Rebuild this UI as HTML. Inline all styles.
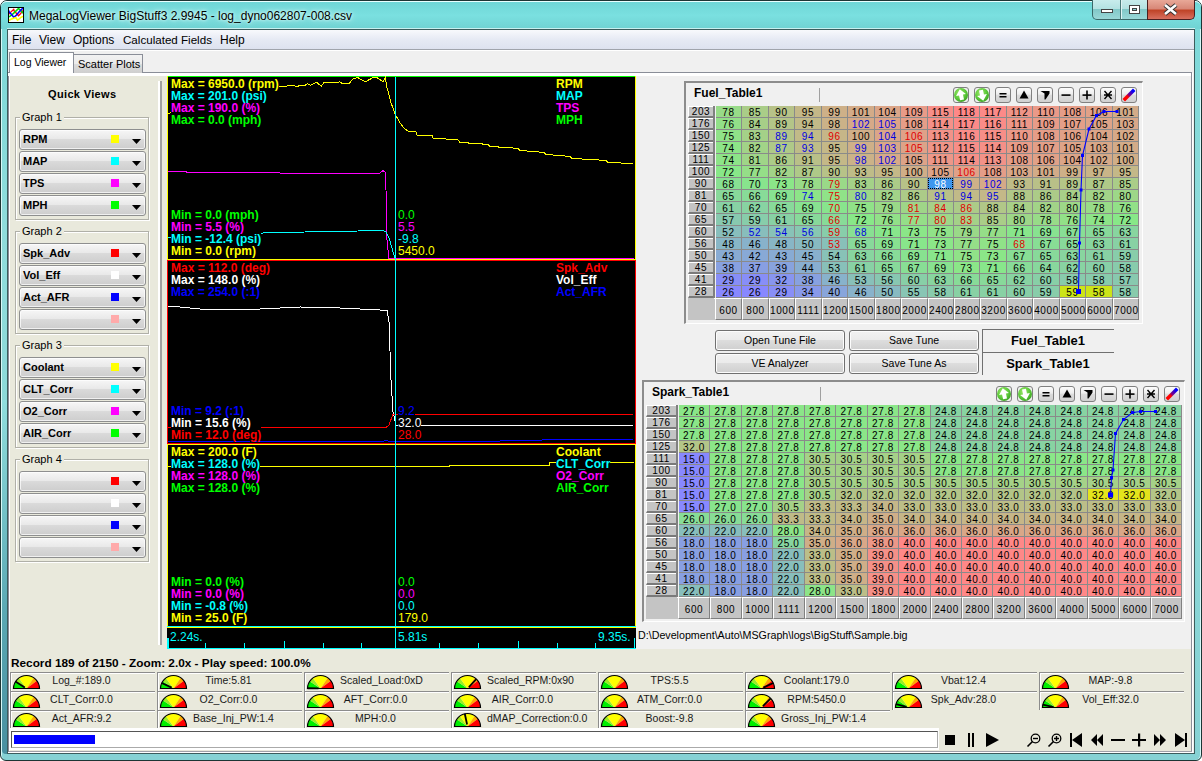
<!DOCTYPE html><html><head><meta charset="utf-8"><style>
*{margin:0;padding:0;box-sizing:border-box}
body{width:1202px;height:761px;overflow:hidden;position:relative;background:#fff;font-family:"Liberation Sans",sans-serif;font-size:11px;color:#000}
div{position:absolute}
.t{white-space:pre;line-height:12px}
.b{font-weight:bold}
</style></head><body><div style="position:absolute;left:0px;top:0px;width:1202px;height:761px;background:linear-gradient(#7ad8d8,#8fdcdc 30%,#86d2d4);border:1px solid #1d3534;border-radius:7px 7px 6px 6px;box-shadow:inset 1px 1px 0 #d8f8f8,inset -1px 0 0 #d8f8f8"></div><div style="position:absolute;left:2px;top:400px;width:5px;height:354px;background:linear-gradient(#90dede,#5aa8b4 60%,#4890a0);border-radius:0 0 0 4px"></div><div style="position:absolute;left:1px;top:1px;width:1200px;height:28px;background:linear-gradient(#6fd6d6,#7ae0e0 50%,#70d2d2);border-radius:6px 6px 0 0;border-top:1px solid #e8ffff"></div><div style="position:absolute;left:7px;top:28px;width:1188px;height:1px;background:#c8f0f0"></div><div style="position:absolute;left:7px;top:29px;width:1188px;height:725px;background:#f0f0f0;border:1px solid #3c5c5c"></div><div style="position:absolute;left:8px;top:7px;width:16px;height:16px;background:#fff;border:1px solid #000"><svg width="14" height="14" style="position:absolute;left:0;top:0"><polyline points="0,6.2 2.2,3.6 4.7,1.4 5.4,3.3 7.6,5.5 9.5,7.7 11.7,5.5 14,2.5" stroke="#f00" stroke-width="1.3" fill="none"/><polyline points="0,9 2.8,6.8 5,4.9 7.6,2.4 9.5,0.5 11.7,2.4 14,5.2" stroke="#0d0" stroke-width="1.5" fill="none"/><polyline points="-0.5,2.4 0.3,3.9 1.9,5.8 3.8,8 4.7,9.3 6.9,7.7 10.4,3.6 12.6,1.4 14,0" stroke="#00f" stroke-width="1.5" fill="none"/><polyline points="0,12.5 1.9,11.2 5.4,9.9 6.9,9.6 8.5,12.1 10,11.2 11.9,9.3 14,8.4" stroke="#ff0" stroke-width="1.6" fill="none"/></svg></div><div style="position:absolute;left:29px;top:9px;white-space:pre;font-size:12px;line-height:14px;color:#000;text-shadow:0 0 6px #e8fff8,0 0 3px #e8fff8">MegaLogViewer BigStuff3 2.9945 - log_dyno062807-008.csv</div><div style="position:absolute;left:1092px;top:0px;width:29px;height:20px;background:linear-gradient(#c8ecec,#b4e2e2 45%,#82c8c8 50%,#9ad8d8);border:1px solid #3a6868;border-top:none;border-radius:0 0 0 5px"><div style="position:absolute;left:8px;top:9px;width:12px;height:4px;background:#fff;border:1px solid #444"></div></div><div style="position:absolute;left:1120px;top:0px;width:28px;height:20px;background:linear-gradient(#c8ecec,#b4e2e2 45%,#82c8c8 50%,#9ad8d8);border:1px solid #3a6868;border-top:none;border-left:1px solid #4a7a7a;box-shadow:inset 1px 0 0 #e0f4f4"><div style="position:absolute;left:8px;top:5px;width:11px;height:9px;background:#fff;border:1px solid #444"><div style="position:absolute;left:2px;top:2px;width:5px;height:3px;background:#8cc;border:1px solid #444"></div></div></div><div style="position:absolute;left:1147px;top:0px;width:48px;height:20px;background:linear-gradient(#e8a898,#d88878 45%,#c04428 55%,#d87060);border:1px solid #4a2020;border-top:none;border-radius:0 0 5px 0"><svg width="48" height="20" style="position:absolute;left:-1px;top:0"><path d="M18 5 L29 14 M29 5 L18 14" stroke="#333" stroke-width="4.5"/><path d="M18 5 L29 14 M29 5 L18 14" stroke="#fff" stroke-width="2.6"/></svg></div><div style="position:absolute;left:8px;top:30px;width:1186px;height:19px;background:linear-gradient(#f8f9fc,#e6eaf4 50%,#dde2ef)"></div><div style="position:absolute;left:8px;top:49px;width:1186px;height:1px;background:#a0a4ac"></div><div style="position:absolute;left:8px;top:50px;width:1186px;height:1px;background:#fff"></div><div style="position:absolute;left:12px;top:33px;white-space:pre;font-size:12px;line-height:14px">File</div><div style="position:absolute;left:39px;top:33px;white-space:pre;font-size:12px;line-height:14px">View</div><div style="position:absolute;left:73px;top:33px;white-space:pre;font-size:12px;line-height:14px">Options</div><div style="position:absolute;left:123px;top:33px;white-space:pre;font-size:11.6px;line-height:14px">Calculated Fields</div><div style="position:absolute;left:220px;top:33px;white-space:pre;font-size:12px;line-height:14px">Help</div><div style="position:absolute;left:8px;top:51px;width:1186px;height:22px;background:#f0f0f0"></div><div style="position:absolute;left:8px;top:72px;width:1184px;height:1px;background:#8a8e98"></div><div style="position:absolute;left:8px;top:73px;width:1184px;height:3px;background:#fff"></div><div style="position:absolute;left:9px;top:52px;width:65px;height:21px;background:#fff;border:1px solid #8a8e98;border-bottom:none"></div><div style="position:absolute;left:14px;top:56px;white-space:pre;font-size:10.5px;line-height:13px">Log Viewer</div><div style="position:absolute;left:73px;top:54px;width:70px;height:19px;background:linear-gradient(#f2f2f2,#ebebeb 50%,#dcdcdc 50%,#cfcfcf);border:1px solid #8a8e98;border-bottom:none"></div><div style="position:absolute;left:78px;top:58px;white-space:pre;font-size:11px;line-height:13px">Scatter Plots</div><div style="position:absolute;left:10px;top:76px;width:1181px;height:675px;background:#e9e9dc"></div><div style="position:absolute;left:8px;top:76px;width:1px;height:676px;background:#8a8a96"></div><div style="position:absolute;left:9px;top:76px;width:1px;height:675px;background:#fff"></div><div style="position:absolute;left:1191px;top:72px;width:1px;height:680px;background:#8a8e98"></div><div style="position:absolute;left:1192px;top:73px;width:1px;height:680px;background:#fff"></div><div style="position:absolute;left:9px;top:751px;width:1183px;height:1px;background:#a0a0a8"></div><div style="position:absolute;left:8px;top:752px;width:1185px;height:1px;background:#fff"></div><div style="position:absolute;left:48px;top:88px;white-space:pre;font-weight:bold;font-size:11px;line-height:12px;letter-spacing:0.35px">Quick Views</div><div style="position:absolute;left:158px;top:81px;width:2px;height:564px;background:#fff"></div><div style="position:absolute;left:160px;top:81px;width:2px;height:564px;background:#a0a0a0"></div><div style="position:absolute;left:15px;top:117px;width:134px;height:103px;border:1px solid #b0b0a8;box-shadow:inset 1px 1px 0 #fff,1px 1px 0 #fff"></div><div style="position:absolute;left:20px;top:111px;white-space:pre;font-size:11px;line-height:12px;background:#e9e9dc;padding:0 2px">Graph 1</div><div style="position:absolute;left:19px;top:129px;width:127px;height:21px;border:1px solid #8e8f8f;border-radius:3px;background:linear-gradient(#f6f6f6,#e9e9e9 45%,#dadada 50%,#cdcdcd);box-shadow:inset 0 0 0 1px rgba(255,255,255,.7)"></div><div style="position:absolute;left:23px;top:133px;white-space:pre;font-weight:bold;font-size:11px;line-height:12px">RPM</div><div style="position:absolute;left:111px;top:135px;width:8px;height:8px;background:#ffff00"></div><svg style="position:absolute;left:132px;top:139px" width="9" height="5"><path d="M0 0 H9 L4.5 5 Z" fill="#000"/></svg><div style="position:absolute;left:19px;top:151px;width:127px;height:21px;border:1px solid #8e8f8f;border-radius:3px;background:linear-gradient(#f6f6f6,#e9e9e9 45%,#dadada 50%,#cdcdcd);box-shadow:inset 0 0 0 1px rgba(255,255,255,.7)"></div><div style="position:absolute;left:23px;top:155px;white-space:pre;font-weight:bold;font-size:11px;line-height:12px">MAP</div><div style="position:absolute;left:111px;top:157px;width:8px;height:8px;background:#00ffff"></div><svg style="position:absolute;left:132px;top:161px" width="9" height="5"><path d="M0 0 H9 L4.5 5 Z" fill="#000"/></svg><div style="position:absolute;left:19px;top:173px;width:127px;height:21px;border:1px solid #8e8f8f;border-radius:3px;background:linear-gradient(#f6f6f6,#e9e9e9 45%,#dadada 50%,#cdcdcd);box-shadow:inset 0 0 0 1px rgba(255,255,255,.7)"></div><div style="position:absolute;left:23px;top:177px;white-space:pre;font-weight:bold;font-size:11px;line-height:12px">TPS</div><div style="position:absolute;left:111px;top:179px;width:8px;height:8px;background:#ff00ff"></div><svg style="position:absolute;left:132px;top:183px" width="9" height="5"><path d="M0 0 H9 L4.5 5 Z" fill="#000"/></svg><div style="position:absolute;left:19px;top:195px;width:127px;height:21px;border:1px solid #8e8f8f;border-radius:3px;background:linear-gradient(#f6f6f6,#e9e9e9 45%,#dadada 50%,#cdcdcd);box-shadow:inset 0 0 0 1px rgba(255,255,255,.7)"></div><div style="position:absolute;left:23px;top:199px;white-space:pre;font-weight:bold;font-size:11px;line-height:12px">MPH</div><div style="position:absolute;left:111px;top:201px;width:8px;height:8px;background:#00ff00"></div><svg style="position:absolute;left:132px;top:205px" width="9" height="5"><path d="M0 0 H9 L4.5 5 Z" fill="#000"/></svg><div style="position:absolute;left:15px;top:231px;width:134px;height:103px;border:1px solid #b0b0a8;box-shadow:inset 1px 1px 0 #fff,1px 1px 0 #fff"></div><div style="position:absolute;left:20px;top:225px;white-space:pre;font-size:11px;line-height:12px;background:#e9e9dc;padding:0 2px">Graph 2</div><div style="position:absolute;left:19px;top:243px;width:127px;height:21px;border:1px solid #8e8f8f;border-radius:3px;background:linear-gradient(#f6f6f6,#e9e9e9 45%,#dadada 50%,#cdcdcd);box-shadow:inset 0 0 0 1px rgba(255,255,255,.7)"></div><div style="position:absolute;left:23px;top:247px;white-space:pre;font-weight:bold;font-size:11px;line-height:12px">Spk_Adv</div><div style="position:absolute;left:111px;top:249px;width:8px;height:8px;background:#ff0000"></div><svg style="position:absolute;left:132px;top:253px" width="9" height="5"><path d="M0 0 H9 L4.5 5 Z" fill="#000"/></svg><div style="position:absolute;left:19px;top:265px;width:127px;height:21px;border:1px solid #8e8f8f;border-radius:3px;background:linear-gradient(#f6f6f6,#e9e9e9 45%,#dadada 50%,#cdcdcd);box-shadow:inset 0 0 0 1px rgba(255,255,255,.7)"></div><div style="position:absolute;left:23px;top:269px;white-space:pre;font-weight:bold;font-size:11px;line-height:12px">Vol_Eff</div><div style="position:absolute;left:111px;top:271px;width:8px;height:8px;background:#ffffff"></div><svg style="position:absolute;left:132px;top:275px" width="9" height="5"><path d="M0 0 H9 L4.5 5 Z" fill="#000"/></svg><div style="position:absolute;left:19px;top:287px;width:127px;height:21px;border:1px solid #8e8f8f;border-radius:3px;background:linear-gradient(#f6f6f6,#e9e9e9 45%,#dadada 50%,#cdcdcd);box-shadow:inset 0 0 0 1px rgba(255,255,255,.7)"></div><div style="position:absolute;left:23px;top:291px;white-space:pre;font-weight:bold;font-size:11px;line-height:12px">Act_AFR</div><div style="position:absolute;left:111px;top:293px;width:8px;height:8px;background:#0000ff"></div><svg style="position:absolute;left:132px;top:297px" width="9" height="5"><path d="M0 0 H9 L4.5 5 Z" fill="#000"/></svg><div style="position:absolute;left:19px;top:309px;width:127px;height:21px;border:1px solid #8e8f8f;border-radius:3px;background:linear-gradient(#f6f6f6,#e9e9e9 45%,#dadada 50%,#cdcdcd);box-shadow:inset 0 0 0 1px rgba(255,255,255,.7)"></div><div style="position:absolute;left:23px;top:313px;white-space:pre;font-weight:bold;font-size:11px;line-height:12px"></div><div style="position:absolute;left:111px;top:315px;width:8px;height:8px;background:#ffaaaa"></div><svg style="position:absolute;left:132px;top:319px" width="9" height="5"><path d="M0 0 H9 L4.5 5 Z" fill="#000"/></svg><div style="position:absolute;left:15px;top:345px;width:134px;height:103px;border:1px solid #b0b0a8;box-shadow:inset 1px 1px 0 #fff,1px 1px 0 #fff"></div><div style="position:absolute;left:20px;top:339px;white-space:pre;font-size:11px;line-height:12px;background:#e9e9dc;padding:0 2px">Graph 3</div><div style="position:absolute;left:19px;top:357px;width:127px;height:21px;border:1px solid #8e8f8f;border-radius:3px;background:linear-gradient(#f6f6f6,#e9e9e9 45%,#dadada 50%,#cdcdcd);box-shadow:inset 0 0 0 1px rgba(255,255,255,.7)"></div><div style="position:absolute;left:23px;top:361px;white-space:pre;font-weight:bold;font-size:11px;line-height:12px">Coolant</div><div style="position:absolute;left:111px;top:363px;width:8px;height:8px;background:#ffff00"></div><svg style="position:absolute;left:132px;top:367px" width="9" height="5"><path d="M0 0 H9 L4.5 5 Z" fill="#000"/></svg><div style="position:absolute;left:19px;top:379px;width:127px;height:21px;border:1px solid #8e8f8f;border-radius:3px;background:linear-gradient(#f6f6f6,#e9e9e9 45%,#dadada 50%,#cdcdcd);box-shadow:inset 0 0 0 1px rgba(255,255,255,.7)"></div><div style="position:absolute;left:23px;top:383px;white-space:pre;font-weight:bold;font-size:11px;line-height:12px">CLT_Corr</div><div style="position:absolute;left:111px;top:385px;width:8px;height:8px;background:#00ffff"></div><svg style="position:absolute;left:132px;top:389px" width="9" height="5"><path d="M0 0 H9 L4.5 5 Z" fill="#000"/></svg><div style="position:absolute;left:19px;top:401px;width:127px;height:21px;border:1px solid #8e8f8f;border-radius:3px;background:linear-gradient(#f6f6f6,#e9e9e9 45%,#dadada 50%,#cdcdcd);box-shadow:inset 0 0 0 1px rgba(255,255,255,.7)"></div><div style="position:absolute;left:23px;top:405px;white-space:pre;font-weight:bold;font-size:11px;line-height:12px">O2_Corr</div><div style="position:absolute;left:111px;top:407px;width:8px;height:8px;background:#ff00ff"></div><svg style="position:absolute;left:132px;top:411px" width="9" height="5"><path d="M0 0 H9 L4.5 5 Z" fill="#000"/></svg><div style="position:absolute;left:19px;top:423px;width:127px;height:21px;border:1px solid #8e8f8f;border-radius:3px;background:linear-gradient(#f6f6f6,#e9e9e9 45%,#dadada 50%,#cdcdcd);box-shadow:inset 0 0 0 1px rgba(255,255,255,.7)"></div><div style="position:absolute;left:23px;top:427px;white-space:pre;font-weight:bold;font-size:11px;line-height:12px">AIR_Corr</div><div style="position:absolute;left:111px;top:429px;width:8px;height:8px;background:#00ff00"></div><svg style="position:absolute;left:132px;top:433px" width="9" height="5"><path d="M0 0 H9 L4.5 5 Z" fill="#000"/></svg><div style="position:absolute;left:15px;top:459px;width:134px;height:103px;border:1px solid #b0b0a8;box-shadow:inset 1px 1px 0 #fff,1px 1px 0 #fff"></div><div style="position:absolute;left:20px;top:453px;white-space:pre;font-size:11px;line-height:12px;background:#e9e9dc;padding:0 2px">Graph 4</div><div style="position:absolute;left:19px;top:471px;width:127px;height:21px;border:1px solid #8e8f8f;border-radius:3px;background:linear-gradient(#f6f6f6,#e9e9e9 45%,#dadada 50%,#cdcdcd);box-shadow:inset 0 0 0 1px rgba(255,255,255,.7)"></div><div style="position:absolute;left:23px;top:475px;white-space:pre;font-weight:bold;font-size:11px;line-height:12px"></div><div style="position:absolute;left:111px;top:477px;width:8px;height:8px;background:#ff0000"></div><svg style="position:absolute;left:132px;top:481px" width="9" height="5"><path d="M0 0 H9 L4.5 5 Z" fill="#000"/></svg><div style="position:absolute;left:19px;top:493px;width:127px;height:21px;border:1px solid #8e8f8f;border-radius:3px;background:linear-gradient(#f6f6f6,#e9e9e9 45%,#dadada 50%,#cdcdcd);box-shadow:inset 0 0 0 1px rgba(255,255,255,.7)"></div><div style="position:absolute;left:23px;top:497px;white-space:pre;font-weight:bold;font-size:11px;line-height:12px"></div><div style="position:absolute;left:111px;top:499px;width:8px;height:8px;background:#ffffff"></div><svg style="position:absolute;left:132px;top:503px" width="9" height="5"><path d="M0 0 H9 L4.5 5 Z" fill="#000"/></svg><div style="position:absolute;left:19px;top:515px;width:127px;height:21px;border:1px solid #8e8f8f;border-radius:3px;background:linear-gradient(#f6f6f6,#e9e9e9 45%,#dadada 50%,#cdcdcd);box-shadow:inset 0 0 0 1px rgba(255,255,255,.7)"></div><div style="position:absolute;left:23px;top:519px;white-space:pre;font-weight:bold;font-size:11px;line-height:12px"></div><div style="position:absolute;left:111px;top:521px;width:8px;height:8px;background:#0000ff"></div><svg style="position:absolute;left:132px;top:525px" width="9" height="5"><path d="M0 0 H9 L4.5 5 Z" fill="#000"/></svg><div style="position:absolute;left:19px;top:537px;width:127px;height:21px;border:1px solid #8e8f8f;border-radius:3px;background:linear-gradient(#f6f6f6,#e9e9e9 45%,#dadada 50%,#cdcdcd);box-shadow:inset 0 0 0 1px rgba(255,255,255,.7)"></div><div style="position:absolute;left:23px;top:541px;white-space:pre;font-weight:bold;font-size:11px;line-height:12px"></div><div style="position:absolute;left:111px;top:543px;width:8px;height:8px;background:#ffaaaa"></div><svg style="position:absolute;left:132px;top:547px" width="9" height="5"><path d="M0 0 H9 L4.5 5 Z" fill="#000"/></svg><div style="position:absolute;left:167px;top:76px;width:469px;height:573px;background:#000"></div><div style="position:absolute;left:167px;top:76px;width:469px;height:1px;background:#00ff00"></div><div style="position:absolute;left:167px;top:76px;width:1px;height:184px;background:#ffff00"></div><div style="position:absolute;left:635px;top:76px;width:1px;height:184px;background:#ffff00"></div><div style="position:absolute;left:167px;top:259px;width:469px;height:1px;background:#ffff00"></div><div style="position:absolute;left:167px;top:260px;width:469px;height:1px;background:#ff0000"></div><div style="position:absolute;left:167px;top:260px;width:1px;height:184px;background:#ff0000"></div><div style="position:absolute;left:635px;top:260px;width:1px;height:184px;background:#ff0000"></div><div style="position:absolute;left:167px;top:443px;width:469px;height:1px;background:#ff0000"></div><div style="position:absolute;left:167px;top:444px;width:469px;height:1px;background:#ffff00"></div><div style="position:absolute;left:167px;top:444px;width:1px;height:183px;background:#ffff00"></div><div style="position:absolute;left:635px;top:444px;width:1px;height:183px;background:#ffff00"></div><div style="position:absolute;left:167px;top:626px;width:469px;height:1px;background:#ffff00"></div><svg width="1202" height="761" style="position:absolute;left:0;top:0" shape-rendering="crispEdges"><polyline points="168,114 172,112 190,100 220,93 250,89 280.5,86.8 290.4,85.6 296.8,86.2 305,85.3 307.3,83.6 310.2,85.3 316.6,82.4 321.2,86.2 324.2,82.4 338.1,82.4 339.3,81.6 341.6,83.1 349.2,83.3 353.3,78.7 357.4,77.5 365.5,81.6 370.2,79.2 373,77.5 376.6,77.5 383,81.6 385.3,77.5 386.5,85.6 391.1,103.1 395.2,114.2 400,123 404,128.2 408,131 416,132 417,135 432,135 433,138 458,140 460,142.4 488,144.4 490,146.4 518,148.4 520,150.4 544,152.4 546,154.4 570,156.4 572,158.4 606,160.4 608,162.4 633,163.6" stroke="#ffff00" stroke-width="1" fill="none" shape-rendering="crispEdges"/><polyline points="168,171.5 186,171.5 187,172.5 210,172.5 260,172.5 280,173 360,173 380,173 383,170.5 385,172 386,190 387,240 389,259" stroke="#ff00ff" stroke-width="1" fill="none" shape-rendering="crispEdges"/><polyline points="168,237.5 180,236 200,235 230,234 260,233.5 266,232.5 305,232 358,231 383,230.5 386,232 389,238 392,248 395,259" stroke="#00ffff" stroke-width="1" fill="none" shape-rendering="crispEdges"/><polyline points="168,306 180,307 200,309 230,310 260,309 300,307 340,308 360,309 380,310 387,310 389,322 391,380 393,412 396,425 633,425" stroke="#ffffff" stroke-width="1" fill="none" shape-rendering="crispEdges"/><polyline points="168,427.5 386,427.5 389,425 393,414 633,414" stroke="#ff0000" stroke-width="1" fill="none" shape-rendering="crispEdges"/><polyline points="168,441.5 240,441.5 250,441 300,441.5 350,441.5 383,441.5 386,440 389,441.5 400,442 420,441 460,441 500,441 540,440.5 545,439.5 633,439.5" stroke="#0000ff" stroke-width="1" fill="none" shape-rendering="crispEdges"/><polyline points="168,466.5 449,466.5 450,465.5 549,465.5 550,462.5 634,462.5" stroke="#ffff00" stroke-width="1" fill="none" shape-rendering="crispEdges"/><rect x="389" y="258" width="245" height="1" fill="#ff00ff"/><rect x="395" y="77" width="1" height="571" fill="#00ffff"/></svg><div style="left:171px;top:78px;background:#000;font-weight:bold;font-size:12px;line-height:12px"><div style="position:static;white-space:pre;color:#ffff00">Max = 6950.0 (rpm)</div><div style="position:static;white-space:pre;color:#00ffff">Max = 201.0 (psi)</div><div style="position:static;white-space:pre;color:#ff00ff">Max = 190.0 (%)</div><div style="position:static;white-space:pre;color:#00ff00">Max = 0.0 (mph)</div></div><div style="position:absolute;left:556px;top:78px;white-space:pre;font-size:12px;line-height:12px;background:#000;color:#ffff00;font-weight:bold">RPM</div><div style="position:absolute;left:556px;top:90px;white-space:pre;font-size:12px;line-height:12px;background:#000;color:#00ffff;font-weight:bold">MAP</div><div style="position:absolute;left:556px;top:102px;white-space:pre;font-size:12px;line-height:12px;background:#000;color:#ff00ff;font-weight:bold">TPS</div><div style="position:absolute;left:556px;top:114px;white-space:pre;font-size:12px;line-height:12px;background:#000;color:#00ff00;font-weight:bold">MPH</div><div style="left:171px;top:209px;background:#000;font-weight:bold;font-size:12px;line-height:12px"><div style="position:static;white-space:pre;color:#00ff00">Min = 0.0 (mph)</div><div style="position:static;white-space:pre;color:#ff00ff">Min = 5.5 (%)</div><div style="position:static;white-space:pre;color:#00ffff">Min = -12.4 (psi)</div><div style="position:static;white-space:pre;color:#ffff00">Min = 0.0 (rpm)</div></div><div style="position:absolute;left:398px;top:209px;white-space:pre;font-size:12px;line-height:12px;background:#000;color:#00ff00;">0.0</div><div style="position:absolute;left:398px;top:221px;white-space:pre;font-size:12px;line-height:12px;background:#000;color:#ff00ff;">5.5</div><div style="position:absolute;left:398px;top:233px;white-space:pre;font-size:12px;line-height:12px;background:#000;color:#00ffff;">-9.8</div><div style="position:absolute;left:398px;top:245px;white-space:pre;font-size:12px;line-height:12px;background:#000;color:#ffff00;">5450.0</div><div style="left:171px;top:262px;background:#000;font-weight:bold;font-size:12px;line-height:12px"><div style="position:static;white-space:pre;color:#ff0000">Max = 112.0 (deg)</div><div style="position:static;white-space:pre;color:#ffffff">Max = 148.0 (%)</div><div style="position:static;white-space:pre;color:#0000ff">Max = 254.0 (:1)</div></div><div style="position:absolute;left:556px;top:262px;white-space:pre;font-size:12px;line-height:12px;background:#000;color:#ff0000;font-weight:bold">Spk_Adv</div><div style="position:absolute;left:556px;top:274px;white-space:pre;font-size:12px;line-height:12px;background:#000;color:#ffffff;font-weight:bold">Vol_Eff</div><div style="position:absolute;left:556px;top:286px;white-space:pre;font-size:12px;line-height:12px;background:#000;color:#0000ff;font-weight:bold">Act_AFR</div><div style="left:171px;top:405px;background:#000;font-weight:bold;font-size:12px;line-height:12px"><div style="position:static;white-space:pre;color:#0000ff">Min = 9.2 (:1)</div><div style="position:static;white-space:pre;color:#ffffff">Min = 15.6 (%)</div><div style="position:static;white-space:pre;color:#ff0000">Min = 12.0 (deg)</div></div><div style="position:absolute;left:398px;top:405px;white-space:pre;font-size:12px;line-height:12px;background:#000;color:#0000ff;">9.2</div><div style="position:absolute;left:398px;top:417px;white-space:pre;font-size:12px;line-height:12px;background:#000;color:#ffffff;">32.0</div><div style="position:absolute;left:398px;top:429px;white-space:pre;font-size:12px;line-height:12px;background:#000;color:#ff0000;">28.0</div><div style="left:171px;top:446px;background:#000;font-weight:bold;font-size:12px;line-height:12px"><div style="position:static;white-space:pre;color:#ffff00">Max = 200.0 (F)</div><div style="position:static;white-space:pre;color:#00ffff">Max = 128.0 (%)</div><div style="position:static;white-space:pre;color:#ff00ff">Max = 128.0 (%)</div><div style="position:static;white-space:pre;color:#00ff00">Max = 128.0 (%)</div></div><div style="position:absolute;left:556px;top:446px;white-space:pre;font-size:12px;line-height:12px;background:#000;color:#ffff00;font-weight:bold">Coolant</div><div style="position:absolute;left:556px;top:458px;white-space:pre;font-size:12px;line-height:12px;background:#000;color:#00ffff;font-weight:bold">CLT_Corr</div><div style="position:absolute;left:556px;top:470px;white-space:pre;font-size:12px;line-height:12px;background:#000;color:#ff00ff;font-weight:bold">O2_Corr</div><div style="position:absolute;left:556px;top:482px;white-space:pre;font-size:12px;line-height:12px;background:#000;color:#00ff00;font-weight:bold">AIR_Corr</div><div style="left:171px;top:576px;background:#000;font-weight:bold;font-size:12px;line-height:12px"><div style="position:static;white-space:pre;color:#00ff00">Min = 0.0 (%)</div><div style="position:static;white-space:pre;color:#ff00ff">Min = 0.0 (%)</div><div style="position:static;white-space:pre;color:#00ffff">Min = -0.8 (%)</div><div style="position:static;white-space:pre;color:#ffff00">Min = 25.0 (F)</div></div><div style="position:absolute;left:398px;top:576px;white-space:pre;font-size:12px;line-height:12px;background:#000;color:#00ff00;">0.0</div><div style="position:absolute;left:398px;top:588px;white-space:pre;font-size:12px;line-height:12px;background:#000;color:#ff00ff;">0.0</div><div style="position:absolute;left:398px;top:600px;white-space:pre;font-size:12px;line-height:12px;background:#000;color:#00ffff;">0.0</div><div style="position:absolute;left:398px;top:612px;white-space:pre;font-size:12px;line-height:12px;background:#000;color:#ffff00;">179.0</div><div style="position:absolute;left:167px;top:626px;width:469px;height:1px;background:#00ffff"></div><div style="position:absolute;left:167px;top:627px;width:469px;height:1px;background:#ffff00"></div><div style="position:absolute;left:167px;top:648px;width:469px;height:1px;background:#00ffff"></div><svg width="1202" height="761" style="position:absolute;left:0;top:0" shape-rendering="crispEdges"><rect x="167" y="638" width="1" height="10" fill="#00ffff"/><rect x="168" y="638" width="1" height="10" fill="#00ffff"/><rect x="205" y="643" width="1" height="5" fill="#00ffff"/><rect x="244" y="643" width="1" height="5" fill="#00ffff"/><rect x="284" y="641" width="1" height="7" fill="#00ffff"/><rect x="323" y="643" width="1" height="5" fill="#00ffff"/><rect x="361" y="643" width="1" height="5" fill="#00ffff"/><rect x="439" y="643" width="1" height="5" fill="#00ffff"/><rect x="478" y="643" width="1" height="5" fill="#00ffff"/><rect x="518" y="641" width="1" height="7" fill="#00ffff"/><rect x="557" y="643" width="1" height="5" fill="#00ffff"/><rect x="595" y="643" width="1" height="5" fill="#00ffff"/><rect x="634" y="638" width="1" height="10" fill="#00ffff"/><rect x="395" y="641" width="1" height="7" fill="#00ffff"/></svg><div style="position:absolute;left:170px;top:631px;white-space:pre;font-size:12px;line-height:12px;color:#00ffff">2.24s.</div><div style="position:absolute;left:398px;top:631px;white-space:pre;font-size:12px;line-height:12px;color:#00ffff">5.81s</div><div style="position:absolute;left:598px;top:631px;white-space:pre;font-size:12px;line-height:12px;color:#00ffff">9.35s.</div><div style="position:absolute;left:636px;top:76px;width:555px;height:573px;background:#f0f0f0"></div><div style="position:absolute;left:684px;top:81px;width:459px;height:243px;border-top:2px solid #8c8c8c;border-left:2px solid #8c8c8c;border-right:1px solid #fff;border-bottom:1px solid #fff"></div><div style="position:absolute;left:694px;top:87px;white-space:pre;font-weight:bold;font-size:12px;line-height:12px">Fuel_Table1</div><div style="position:absolute;left:819px;top:88px;width:1px;height:14px;background:#a0a0a0"></div><div style="position:absolute;left:716px;top:106px;width:423px;height:192px;background:#8a8a8a"></div><div style="left:0;top:0;font-size:10px;letter-spacing:0.6px;line-height:13px;text-align:center"><div style="left:716px;top:106px;width:25px;height:11px;background:rgb(152,219,136);color:#000;">78</div><div style="left:742px;top:106px;width:26px;height:11px;background:rgb(170,205,136);color:#000;">85</div><div style="left:769px;top:106px;width:25px;height:11px;background:rgb(183,194,136);color:#000;">90</div><div style="left:795px;top:106px;width:26px;height:11px;background:rgb(196,184,136);color:#000;">95</div><div style="left:822px;top:106px;width:25px;height:11px;background:rgb(206,176,136);color:#000;">99</div><div style="left:848px;top:106px;width:26px;height:11px;background:rgb(211,171,136);color:#000;">101</div><div style="left:875px;top:106px;width:25px;height:11px;background:rgb(219,165,136);color:#000;">104</div><div style="left:901px;top:106px;width:26px;height:11px;background:rgb(232,155,136);color:#000;">109</div><div style="left:928px;top:106px;width:25px;height:11px;background:rgb(247,142,136);color:#000;">115</div><div style="left:954px;top:106px;width:25px;height:11px;background:rgb(255,136,136);color:#000;">118</div><div style="left:980px;top:106px;width:26px;height:11px;background:rgb(252,138,136);color:#000;">117</div><div style="left:1007px;top:106px;width:25px;height:11px;background:rgb(239,149,136);color:#000;">112</div><div style="left:1033px;top:106px;width:26px;height:11px;background:rgb(234,153,136);color:#000;">110</div><div style="left:1060px;top:106px;width:25px;height:11px;background:rgb(229,157,136);color:#000;">108</div><div style="left:1086px;top:106px;width:26px;height:11px;background:rgb(224,161,136);color:#000;">106</div><div style="left:1113px;top:106px;width:25px;height:11px;background:rgb(211,171,136);color:#000;">101</div><div style="left:716px;top:118px;width:25px;height:11px;background:rgb(146,224,136);color:#000;">76</div><div style="left:742px;top:118px;width:26px;height:11px;background:rgb(167,207,136);color:#000;">84</div><div style="left:769px;top:118px;width:25px;height:11px;background:rgb(180,197,136);color:#000;">89</div><div style="left:795px;top:118px;width:26px;height:11px;background:rgb(193,186,136);color:#000;">94</div><div style="left:822px;top:118px;width:25px;height:11px;background:rgb(203,178,136);color:#000;">98</div><div style="left:848px;top:118px;width:26px;height:11px;background:rgb(214,169,136);color:#0000e0;">102</div><div style="left:875px;top:118px;width:25px;height:11px;background:rgb(221,163,136);color:#0000e0;">105</div><div style="left:901px;top:118px;width:26px;height:11px;background:rgb(229,157,136);color:#000;">108</div><div style="left:928px;top:118px;width:25px;height:11px;background:rgb(245,144,136);color:#000;">114</div><div style="left:954px;top:118px;width:25px;height:11px;background:rgb(252,138,136);color:#000;">117</div><div style="left:980px;top:118px;width:26px;height:11px;background:rgb(250,140,136);color:#000;">116</div><div style="left:1007px;top:118px;width:25px;height:11px;background:rgb(237,151,136);color:#000;">111</div><div style="left:1033px;top:118px;width:26px;height:11px;background:rgb(232,155,136);color:#000;">109</div><div style="left:1060px;top:118px;width:25px;height:11px;background:rgb(227,159,136);color:#000;">107</div><div style="left:1086px;top:118px;width:26px;height:11px;background:rgb(221,163,136);color:#000;">105</div><div style="left:1113px;top:118px;width:25px;height:11px;background:rgb(216,167,136);color:#000;">103</div><div style="left:716px;top:130px;width:25px;height:11px;background:rgb(144,226,136);color:#000;">75</div><div style="left:742px;top:130px;width:26px;height:11px;background:rgb(164,209,136);color:#000;">83</div><div style="left:769px;top:130px;width:25px;height:11px;background:rgb(180,197,136);color:#0000e0;">89</div><div style="left:795px;top:130px;width:26px;height:11px;background:rgb(193,186,136);color:#0000e0;">94</div><div style="left:822px;top:130px;width:25px;height:11px;background:rgb(198,182,136);color:#e00000;">96</div><div style="left:848px;top:130px;width:26px;height:11px;background:rgb(208,174,136);color:#000;">100</div><div style="left:875px;top:130px;width:25px;height:11px;background:rgb(219,165,136);color:#0000e0;">104</div><div style="left:901px;top:130px;width:26px;height:11px;background:rgb(224,161,136);color:#e00000;">106</div><div style="left:928px;top:130px;width:25px;height:11px;background:rgb(242,146,136);color:#000;">113</div><div style="left:954px;top:130px;width:25px;height:11px;background:rgb(250,140,136);color:#000;">116</div><div style="left:980px;top:130px;width:26px;height:11px;background:rgb(247,142,136);color:#000;">115</div><div style="left:1007px;top:130px;width:25px;height:11px;background:rgb(234,153,136);color:#000;">110</div><div style="left:1033px;top:130px;width:26px;height:11px;background:rgb(229,157,136);color:#000;">108</div><div style="left:1060px;top:130px;width:25px;height:11px;background:rgb(224,161,136);color:#000;">106</div><div style="left:1086px;top:130px;width:26px;height:11px;background:rgb(219,165,136);color:#000;">104</div><div style="left:1113px;top:130px;width:25px;height:11px;background:rgb(214,169,136);color:#000;">102</div><div style="left:716px;top:142px;width:25px;height:11px;background:rgb(141,228,136);color:#000;">74</div><div style="left:742px;top:142px;width:26px;height:11px;background:rgb(162,211,136);color:#000;">82</div><div style="left:769px;top:142px;width:25px;height:11px;background:rgb(175,201,136);color:#0000e0;">87</div><div style="left:795px;top:142px;width:26px;height:11px;background:rgb(190,188,136);color:#0000e0;">93</div><div style="left:822px;top:142px;width:25px;height:11px;background:rgb(196,184,136);color:#000;">95</div><div style="left:848px;top:142px;width:26px;height:11px;background:rgb(206,176,136);color:#0000e0;">99</div><div style="left:875px;top:142px;width:25px;height:11px;background:rgb(216,167,136);color:#0000e0;">103</div><div style="left:901px;top:142px;width:26px;height:11px;background:rgb(221,163,136);color:#e00000;">105</div><div style="left:928px;top:142px;width:25px;height:11px;background:rgb(239,149,136);color:#000;">112</div><div style="left:954px;top:142px;width:25px;height:11px;background:rgb(247,142,136);color:#000;">115</div><div style="left:980px;top:142px;width:26px;height:11px;background:rgb(245,144,136);color:#000;">114</div><div style="left:1007px;top:142px;width:25px;height:11px;background:rgb(232,155,136);color:#000;">109</div><div style="left:1033px;top:142px;width:26px;height:11px;background:rgb(227,159,136);color:#000;">107</div><div style="left:1060px;top:142px;width:25px;height:11px;background:rgb(221,163,136);color:#000;">105</div><div style="left:1086px;top:142px;width:26px;height:11px;background:rgb(216,167,136);color:#000;">103</div><div style="left:1113px;top:142px;width:25px;height:11px;background:rgb(211,171,136);color:#000;">101</div><div style="left:716px;top:154px;width:25px;height:11px;background:rgb(141,228,136);color:#000;">74</div><div style="left:742px;top:154px;width:26px;height:11px;background:rgb(159,213,136);color:#000;">81</div><div style="left:769px;top:154px;width:25px;height:11px;background:rgb(172,203,136);color:#000;">86</div><div style="left:795px;top:154px;width:26px;height:11px;background:rgb(185,192,136);color:#000;">91</div><div style="left:822px;top:154px;width:25px;height:11px;background:rgb(196,184,136);color:#000;">95</div><div style="left:848px;top:154px;width:26px;height:11px;background:rgb(203,178,136);color:#0000e0;">98</div><div style="left:875px;top:154px;width:25px;height:11px;background:rgb(214,169,136);color:#0000e0;">102</div><div style="left:901px;top:154px;width:26px;height:11px;background:rgb(221,163,136);color:#000;">105</div><div style="left:928px;top:154px;width:25px;height:11px;background:rgb(237,151,136);color:#000;">111</div><div style="left:954px;top:154px;width:25px;height:11px;background:rgb(245,144,136);color:#000;">114</div><div style="left:980px;top:154px;width:26px;height:11px;background:rgb(242,146,136);color:#000;">113</div><div style="left:1007px;top:154px;width:25px;height:11px;background:rgb(229,157,136);color:#000;">108</div><div style="left:1033px;top:154px;width:26px;height:11px;background:rgb(224,161,136);color:#000;">106</div><div style="left:1060px;top:154px;width:25px;height:11px;background:rgb(219,165,136);color:#000;">104</div><div style="left:1086px;top:154px;width:26px;height:11px;background:rgb(214,169,136);color:#000;">102</div><div style="left:1113px;top:154px;width:25px;height:11px;background:rgb(208,174,136);color:#000;">100</div><div style="left:716px;top:166px;width:25px;height:11px;background:rgb(136,232,136);color:#000;">72</div><div style="left:742px;top:166px;width:26px;height:11px;background:rgb(149,222,136);color:#000;">77</div><div style="left:769px;top:166px;width:25px;height:11px;background:rgb(162,211,136);color:#000;">82</div><div style="left:795px;top:166px;width:26px;height:11px;background:rgb(175,201,136);color:#000;">87</div><div style="left:822px;top:166px;width:25px;height:11px;background:rgb(183,194,136);color:#000;">90</div><div style="left:848px;top:166px;width:26px;height:11px;background:rgb(190,188,136);color:#000;">93</div><div style="left:875px;top:166px;width:25px;height:11px;background:rgb(196,184,136);color:#000;">95</div><div style="left:901px;top:166px;width:26px;height:11px;background:rgb(208,174,136);color:#000;">100</div><div style="left:928px;top:166px;width:25px;height:11px;background:rgb(221,163,136);color:#000;">105</div><div style="left:954px;top:166px;width:25px;height:11px;background:rgb(224,161,136);color:#e00000;">106</div><div style="left:980px;top:166px;width:26px;height:11px;background:rgb(229,157,136);color:#000;">108</div><div style="left:1007px;top:166px;width:25px;height:11px;background:rgb(216,167,136);color:#000;">103</div><div style="left:1033px;top:166px;width:26px;height:11px;background:rgb(211,171,136);color:#000;">101</div><div style="left:1060px;top:166px;width:25px;height:11px;background:rgb(206,176,136);color:#000;">99</div><div style="left:1086px;top:166px;width:26px;height:11px;background:rgb(201,180,136);color:#000;">97</div><div style="left:1113px;top:166px;width:25px;height:11px;background:rgb(196,184,136);color:#000;">95</div><div style="left:716px;top:178px;width:25px;height:11px;background:rgb(136,224,146);color:#000;">68</div><div style="left:742px;top:178px;width:26px;height:11px;background:rgb(136,228,141);color:#000;">70</div><div style="left:769px;top:178px;width:25px;height:11px;background:rgb(139,230,136);color:#000;">73</div><div style="left:795px;top:178px;width:26px;height:11px;background:rgb(152,219,136);color:#000;">78</div><div style="left:822px;top:178px;width:25px;height:11px;background:rgb(154,217,136);color:#e00000;">79</div><div style="left:848px;top:178px;width:26px;height:11px;background:rgb(164,209,136);color:#000;">83</div><div style="left:875px;top:178px;width:25px;height:11px;background:rgb(172,203,136);color:#000;">86</div><div style="left:901px;top:178px;width:26px;height:11px;background:rgb(183,194,136);color:#000;">90</div><div style="left:928px;top:178px;width:25px;height:11px;background:#3d96ee;color:#fff;outline:1px dotted #000;outline-offset:-1px;">98</div><div style="left:954px;top:178px;width:25px;height:11px;background:rgb(206,176,136);color:#0000e0;">99</div><div style="left:980px;top:178px;width:26px;height:11px;background:rgb(214,169,136);color:#0000e0;">102</div><div style="left:1007px;top:178px;width:25px;height:11px;background:rgb(190,188,136);color:#000;">93</div><div style="left:1033px;top:178px;width:26px;height:11px;background:rgb(185,192,136);color:#000;">91</div><div style="left:1060px;top:178px;width:25px;height:11px;background:rgb(180,197,136);color:#000;">89</div><div style="left:1086px;top:178px;width:26px;height:11px;background:rgb(175,201,136);color:#000;">87</div><div style="left:1113px;top:178px;width:25px;height:11px;background:rgb(170,205,136);color:#000;">85</div><div style="left:716px;top:190px;width:25px;height:11px;background:rgb(136,217,154);color:#000;">65</div><div style="left:742px;top:190px;width:26px;height:11px;background:rgb(136,219,152);color:#000;">66</div><div style="left:769px;top:190px;width:25px;height:11px;background:rgb(136,226,144);color:#000;">69</div><div style="left:795px;top:190px;width:26px;height:11px;background:rgb(141,228,136);color:#0000e0;">74</div><div style="left:822px;top:190px;width:25px;height:11px;background:rgb(144,226,136);color:#e00000;">75</div><div style="left:848px;top:190px;width:26px;height:11px;background:rgb(157,215,136);color:#0000e0;">80</div><div style="left:875px;top:190px;width:25px;height:11px;background:rgb(162,211,136);color:#000;">82</div><div style="left:901px;top:190px;width:26px;height:11px;background:rgb(172,203,136);color:#000;">86</div><div style="left:928px;top:190px;width:25px;height:11px;background:rgb(185,192,136);color:#0000e0;">91</div><div style="left:954px;top:190px;width:25px;height:11px;background:rgb(193,186,136);color:#0000e0;">94</div><div style="left:980px;top:190px;width:26px;height:11px;background:rgb(196,184,136);color:#0000e0;">95</div><div style="left:1007px;top:190px;width:25px;height:11px;background:rgb(177,199,136);color:#000;">88</div><div style="left:1033px;top:190px;width:26px;height:11px;background:rgb(172,203,136);color:#000;">86</div><div style="left:1060px;top:190px;width:25px;height:11px;background:rgb(167,207,136);color:#000;">84</div><div style="left:1086px;top:190px;width:26px;height:11px;background:rgb(162,211,136);color:#000;">82</div><div style="left:1113px;top:190px;width:25px;height:11px;background:rgb(157,215,136);color:#000;">80</div><div style="left:716px;top:202px;width:25px;height:11px;background:rgb(136,209,164);color:#000;">61</div><div style="left:742px;top:202px;width:26px;height:11px;background:rgb(136,211,162);color:#000;">62</div><div style="left:769px;top:202px;width:25px;height:11px;background:rgb(136,217,154);color:#000;">65</div><div style="left:795px;top:202px;width:26px;height:11px;background:rgb(136,226,144);color:#000;">69</div><div style="left:822px;top:202px;width:25px;height:11px;background:rgb(136,228,141);color:#e00000;">70</div><div style="left:848px;top:202px;width:26px;height:11px;background:rgb(144,226,136);color:#000;">75</div><div style="left:875px;top:202px;width:25px;height:11px;background:rgb(154,217,136);color:#000;">79</div><div style="left:901px;top:202px;width:26px;height:11px;background:rgb(159,213,136);color:#e00000;">81</div><div style="left:928px;top:202px;width:25px;height:11px;background:rgb(167,207,136);color:#e00000;">84</div><div style="left:954px;top:202px;width:25px;height:11px;background:rgb(172,203,136);color:#e00000;">86</div><div style="left:980px;top:202px;width:26px;height:11px;background:rgb(177,199,136);color:#000;">88</div><div style="left:1007px;top:202px;width:25px;height:11px;background:rgb(167,207,136);color:#000;">84</div><div style="left:1033px;top:202px;width:26px;height:11px;background:rgb(162,211,136);color:#000;">82</div><div style="left:1060px;top:202px;width:25px;height:11px;background:rgb(157,215,136);color:#000;">80</div><div style="left:1086px;top:202px;width:26px;height:11px;background:rgb(152,219,136);color:#000;">78</div><div style="left:1113px;top:202px;width:25px;height:11px;background:rgb(146,224,136);color:#000;">76</div><div style="left:716px;top:214px;width:25px;height:11px;background:rgb(136,201,175);color:#000;">57</div><div style="left:742px;top:214px;width:26px;height:11px;background:rgb(136,205,170);color:#000;">59</div><div style="left:769px;top:214px;width:25px;height:11px;background:rgb(136,209,164);color:#000;">61</div><div style="left:795px;top:214px;width:26px;height:11px;background:rgb(136,217,154);color:#000;">65</div><div style="left:822px;top:214px;width:25px;height:11px;background:rgb(136,219,152);color:#e00000;">66</div><div style="left:848px;top:214px;width:26px;height:11px;background:rgb(136,232,136);color:#000;">72</div><div style="left:875px;top:214px;width:25px;height:11px;background:rgb(146,224,136);color:#000;">76</div><div style="left:901px;top:214px;width:26px;height:11px;background:rgb(149,222,136);color:#e00000;">77</div><div style="left:928px;top:214px;width:25px;height:11px;background:rgb(157,215,136);color:#e00000;">80</div><div style="left:954px;top:214px;width:25px;height:11px;background:rgb(164,209,136);color:#e00000;">83</div><div style="left:980px;top:214px;width:26px;height:11px;background:rgb(170,205,136);color:#000;">85</div><div style="left:1007px;top:214px;width:25px;height:11px;background:rgb(157,215,136);color:#000;">80</div><div style="left:1033px;top:214px;width:26px;height:11px;background:rgb(152,219,136);color:#000;">78</div><div style="left:1060px;top:214px;width:25px;height:11px;background:rgb(146,224,136);color:#000;">76</div><div style="left:1086px;top:214px;width:26px;height:11px;background:rgb(141,228,136);color:#000;">74</div><div style="left:1113px;top:214px;width:25px;height:11px;background:rgb(136,232,136);color:#000;">72</div><div style="left:716px;top:226px;width:25px;height:11px;background:rgb(136,190,188);color:#000;">52</div><div style="left:742px;top:226px;width:26px;height:11px;background:rgb(136,190,188);color:#0000e0;">52</div><div style="left:769px;top:226px;width:25px;height:11px;background:rgb(136,194,183);color:#0000e0;">54</div><div style="left:795px;top:226px;width:26px;height:11px;background:rgb(136,199,177);color:#0000e0;">56</div><div style="left:822px;top:226px;width:25px;height:11px;background:rgb(136,205,170);color:#e00000;">59</div><div style="left:848px;top:226px;width:26px;height:11px;background:rgb(136,224,146);color:#0000e0;">68</div><div style="left:875px;top:226px;width:25px;height:11px;background:rgb(136,230,139);color:#000;">71</div><div style="left:901px;top:226px;width:26px;height:11px;background:rgb(139,230,136);color:#000;">73</div><div style="left:928px;top:226px;width:25px;height:11px;background:rgb(144,226,136);color:#000;">75</div><div style="left:954px;top:226px;width:25px;height:11px;background:rgb(154,217,136);color:#000;">79</div><div style="left:980px;top:226px;width:26px;height:11px;background:rgb(149,222,136);color:#000;">77</div><div style="left:1007px;top:226px;width:25px;height:11px;background:rgb(136,230,139);color:#000;">71</div><div style="left:1033px;top:226px;width:26px;height:11px;background:rgb(136,226,144);color:#000;">69</div><div style="left:1060px;top:226px;width:25px;height:11px;background:rgb(136,222,149);color:#000;">67</div><div style="left:1086px;top:226px;width:26px;height:11px;background:rgb(136,217,154);color:#000;">65</div><div style="left:1113px;top:226px;width:25px;height:11px;background:rgb(136,213,159);color:#000;">63</div><div style="left:716px;top:238px;width:25px;height:11px;background:rgb(136,182,198);color:#000;">48</div><div style="left:742px;top:238px;width:26px;height:11px;background:rgb(136,178,203);color:#000;">46</div><div style="left:769px;top:238px;width:25px;height:11px;background:rgb(136,182,198);color:#000;">48</div><div style="left:795px;top:238px;width:26px;height:11px;background:rgb(136,186,193);color:#000;">50</div><div style="left:822px;top:238px;width:25px;height:11px;background:rgb(136,192,185);color:#e00000;">53</div><div style="left:848px;top:238px;width:26px;height:11px;background:rgb(136,217,154);color:#000;">65</div><div style="left:875px;top:238px;width:25px;height:11px;background:rgb(136,226,144);color:#000;">69</div><div style="left:901px;top:238px;width:26px;height:11px;background:rgb(136,230,139);color:#000;">71</div><div style="left:928px;top:238px;width:25px;height:11px;background:rgb(139,230,136);color:#000;">73</div><div style="left:954px;top:238px;width:25px;height:11px;background:rgb(149,222,136);color:#000;">77</div><div style="left:980px;top:238px;width:26px;height:11px;background:rgb(144,226,136);color:#000;">75</div><div style="left:1007px;top:238px;width:25px;height:11px;background:rgb(136,224,146);color:#e00000;">68</div><div style="left:1033px;top:238px;width:26px;height:11px;background:rgb(136,222,149);color:#000;">67</div><div style="left:1060px;top:238px;width:25px;height:11px;background:rgb(136,217,154);color:#000;">65</div><div style="left:1086px;top:238px;width:26px;height:11px;background:rgb(136,213,159);color:#000;">63</div><div style="left:1113px;top:238px;width:25px;height:11px;background:rgb(136,209,164);color:#000;">61</div><div style="left:716px;top:250px;width:25px;height:11px;background:rgb(136,171,211);color:#000;">43</div><div style="left:742px;top:250px;width:26px;height:11px;background:rgb(136,169,214);color:#000;">42</div><div style="left:769px;top:250px;width:25px;height:11px;background:rgb(136,171,211);color:#000;">43</div><div style="left:795px;top:250px;width:26px;height:11px;background:rgb(136,176,206);color:#000;">45</div><div style="left:822px;top:250px;width:25px;height:11px;background:rgb(136,194,183);color:#000;">54</div><div style="left:848px;top:250px;width:26px;height:11px;background:rgb(136,213,159);color:#000;">63</div><div style="left:875px;top:250px;width:25px;height:11px;background:rgb(136,219,152);color:#000;">66</div><div style="left:901px;top:250px;width:26px;height:11px;background:rgb(136,226,144);color:#000;">69</div><div style="left:928px;top:250px;width:25px;height:11px;background:rgb(136,230,139);color:#000;">71</div><div style="left:954px;top:250px;width:25px;height:11px;background:rgb(144,226,136);color:#000;">75</div><div style="left:980px;top:250px;width:26px;height:11px;background:rgb(139,230,136);color:#000;">73</div><div style="left:1007px;top:250px;width:25px;height:11px;background:rgb(136,222,149);color:#000;">67</div><div style="left:1033px;top:250px;width:26px;height:11px;background:rgb(136,217,154);color:#000;">65</div><div style="left:1060px;top:250px;width:25px;height:11px;background:rgb(136,213,159);color:#000;">63</div><div style="left:1086px;top:250px;width:26px;height:11px;background:rgb(136,209,164);color:#000;">61</div><div style="left:1113px;top:250px;width:25px;height:11px;background:rgb(136,205,170);color:#000;">59</div><div style="left:716px;top:262px;width:25px;height:11px;background:rgb(136,161,224);color:#000;">38</div><div style="left:742px;top:262px;width:26px;height:11px;background:rgb(136,159,227);color:#000;">37</div><div style="left:769px;top:262px;width:25px;height:11px;background:rgb(136,163,221);color:#000;">39</div><div style="left:795px;top:262px;width:26px;height:11px;background:rgb(136,174,208);color:#000;">44</div><div style="left:822px;top:262px;width:25px;height:11px;background:rgb(136,192,185);color:#000;">53</div><div style="left:848px;top:262px;width:26px;height:11px;background:rgb(136,209,164);color:#000;">61</div><div style="left:875px;top:262px;width:25px;height:11px;background:rgb(136,217,154);color:#000;">65</div><div style="left:901px;top:262px;width:26px;height:11px;background:rgb(136,222,149);color:#000;">67</div><div style="left:928px;top:262px;width:25px;height:11px;background:rgb(136,226,144);color:#000;">69</div><div style="left:954px;top:262px;width:25px;height:11px;background:rgb(139,230,136);color:#000;">73</div><div style="left:980px;top:262px;width:26px;height:11px;background:rgb(136,230,139);color:#000;">71</div><div style="left:1007px;top:262px;width:25px;height:11px;background:rgb(136,219,152);color:#000;">66</div><div style="left:1033px;top:262px;width:26px;height:11px;background:rgb(136,215,157);color:#000;">64</div><div style="left:1060px;top:262px;width:25px;height:11px;background:rgb(136,211,162);color:#000;">62</div><div style="left:1086px;top:262px;width:26px;height:11px;background:rgb(136,207,167);color:#000;">60</div><div style="left:1113px;top:262px;width:25px;height:11px;background:rgb(136,203,172);color:#000;">58</div><div style="left:716px;top:274px;width:25px;height:11px;background:rgb(136,142,247);color:#000;">29</div><div style="left:742px;top:274px;width:26px;height:11px;background:rgb(136,142,247);color:#000;">29</div><div style="left:769px;top:274px;width:25px;height:11px;background:rgb(136,149,239);color:#000;">32</div><div style="left:795px;top:274px;width:26px;height:11px;background:rgb(136,161,224);color:#000;">38</div><div style="left:822px;top:274px;width:25px;height:11px;background:rgb(136,178,203);color:#000;">46</div><div style="left:848px;top:274px;width:26px;height:11px;background:rgb(136,192,185);color:#000;">53</div><div style="left:875px;top:274px;width:25px;height:11px;background:rgb(136,199,177);color:#000;">56</div><div style="left:901px;top:274px;width:26px;height:11px;background:rgb(136,207,167);color:#000;">60</div><div style="left:928px;top:274px;width:25px;height:11px;background:rgb(136,213,159);color:#000;">63</div><div style="left:954px;top:274px;width:25px;height:11px;background:rgb(136,219,152);color:#000;">66</div><div style="left:980px;top:274px;width:26px;height:11px;background:rgb(136,217,154);color:#000;">65</div><div style="left:1007px;top:274px;width:25px;height:11px;background:rgb(136,211,162);color:#000;">62</div><div style="left:1033px;top:274px;width:26px;height:11px;background:rgb(136,207,167);color:#000;">60</div><div style="left:1060px;top:274px;width:25px;height:11px;background:rgb(136,203,172);color:#000;">58</div><div style="left:1086px;top:274px;width:26px;height:11px;background:rgb(136,203,172);color:#000;">58</div><div style="left:1113px;top:274px;width:25px;height:11px;background:rgb(136,201,175);color:#000;">57</div><div style="left:716px;top:286px;width:25px;height:11px;background:rgb(136,136,255);color:#000;">26</div><div style="left:742px;top:286px;width:26px;height:11px;background:rgb(136,136,255);color:#000;">26</div><div style="left:769px;top:286px;width:25px;height:11px;background:rgb(136,142,247);color:#000;">29</div><div style="left:795px;top:286px;width:26px;height:11px;background:rgb(136,153,234);color:#000;">34</div><div style="left:822px;top:286px;width:25px;height:11px;background:rgb(136,165,219);color:#000;">40</div><div style="left:848px;top:286px;width:26px;height:11px;background:rgb(136,178,203);color:#000;">46</div><div style="left:875px;top:286px;width:25px;height:11px;background:rgb(136,186,193);color:#000;">50</div><div style="left:901px;top:286px;width:26px;height:11px;background:rgb(136,197,180);color:#000;">55</div><div style="left:928px;top:286px;width:25px;height:11px;background:rgb(136,203,172);color:#000;">58</div><div style="left:954px;top:286px;width:25px;height:11px;background:rgb(136,209,164);color:#000;">61</div><div style="left:980px;top:286px;width:26px;height:11px;background:rgb(136,209,164);color:#000;">61</div><div style="left:1007px;top:286px;width:25px;height:11px;background:rgb(136,207,167);color:#000;">60</div><div style="left:1033px;top:286px;width:26px;height:11px;background:rgb(136,205,170);color:#000;">59</div><div style="left:1060px;top:286px;width:25px;height:11px;background:#cce418;color:#000;">59</div><div style="left:1086px;top:286px;width:26px;height:11px;background:#cce418;color:#000;">58</div><div style="left:1113px;top:286px;width:25px;height:11px;background:rgb(136,203,172);color:#000;">58</div></div><div style="left:0;top:0;font-size:10px;letter-spacing:0.6px;text-align:center"><div style="left:688px;top:106px;width:25px;height:12px;background:#c4c4c4;border-top:1px solid #fff;border-left:1px solid #fff;border-bottom:2px solid #7a7a7a;line-height:9px">203</div><div style="left:688px;top:118px;width:25px;height:12px;background:#c4c4c4;border-top:1px solid #fff;border-left:1px solid #fff;border-bottom:2px solid #7a7a7a;line-height:9px">176</div><div style="left:688px;top:130px;width:25px;height:12px;background:#c4c4c4;border-top:1px solid #fff;border-left:1px solid #fff;border-bottom:2px solid #7a7a7a;line-height:9px">150</div><div style="left:688px;top:142px;width:25px;height:12px;background:#c4c4c4;border-top:1px solid #fff;border-left:1px solid #fff;border-bottom:2px solid #7a7a7a;line-height:9px">125</div><div style="left:688px;top:154px;width:25px;height:12px;background:#c4c4c4;border-top:1px solid #fff;border-left:1px solid #fff;border-bottom:2px solid #7a7a7a;line-height:9px">111</div><div style="left:688px;top:166px;width:25px;height:12px;background:#c4c4c4;border-top:1px solid #fff;border-left:1px solid #fff;border-bottom:2px solid #7a7a7a;line-height:9px">100</div><div style="left:688px;top:178px;width:25px;height:12px;background:#c4c4c4;border-top:1px solid #fff;border-left:1px solid #fff;border-bottom:2px solid #7a7a7a;line-height:9px">90</div><div style="left:688px;top:190px;width:25px;height:12px;background:#c4c4c4;border-top:1px solid #fff;border-left:1px solid #fff;border-bottom:2px solid #7a7a7a;line-height:9px">81</div><div style="left:688px;top:202px;width:25px;height:12px;background:#c4c4c4;border-top:1px solid #fff;border-left:1px solid #fff;border-bottom:2px solid #7a7a7a;line-height:9px">70</div><div style="left:688px;top:214px;width:25px;height:12px;background:#c4c4c4;border-top:1px solid #fff;border-left:1px solid #fff;border-bottom:2px solid #7a7a7a;line-height:9px">65</div><div style="left:688px;top:226px;width:25px;height:12px;background:#c4c4c4;border-top:1px solid #fff;border-left:1px solid #fff;border-bottom:2px solid #7a7a7a;line-height:9px">60</div><div style="left:688px;top:238px;width:25px;height:12px;background:#c4c4c4;border-top:1px solid #fff;border-left:1px solid #fff;border-bottom:2px solid #7a7a7a;line-height:9px">56</div><div style="left:688px;top:250px;width:25px;height:12px;background:#c4c4c4;border-top:1px solid #fff;border-left:1px solid #fff;border-bottom:2px solid #7a7a7a;line-height:9px">50</div><div style="left:688px;top:262px;width:25px;height:12px;background:#c4c4c4;border-top:1px solid #fff;border-left:1px solid #fff;border-bottom:2px solid #7a7a7a;line-height:9px">45</div><div style="left:688px;top:274px;width:25px;height:12px;background:#c4c4c4;border-top:1px solid #fff;border-left:1px solid #fff;border-bottom:2px solid #7a7a7a;line-height:9px">41</div><div style="left:688px;top:286px;width:25px;height:12px;background:#c4c4c4;border-top:1px solid #fff;border-left:1px solid #fff;border-bottom:2px solid #7a7a7a;line-height:9px">28</div></div><div style="position:absolute;left:713px;top:106px;width:2px;height:192px;background:#808080"></div><div style="position:absolute;left:688px;top:298px;width:27px;height:22px;background:#c4c4c4"></div><div style="position:absolute;left:714px;top:298px;width:425px;height:1px;background:#fff"></div><div style="left:0;top:0;font-size:10px;letter-spacing:0.6px;text-align:center"><div style="left:715px;top:298px;width:27px;height:22px;background:#c4c4c4;border-left:1px solid #fff;border-top:1px solid #fff;border-right:1px solid #808080;border-bottom:1px solid #808080;line-height:23px">600</div><div style="left:742px;top:298px;width:27px;height:22px;background:#c4c4c4;border-left:1px solid #fff;border-top:1px solid #fff;border-right:1px solid #808080;border-bottom:1px solid #808080;line-height:23px">800</div><div style="left:769px;top:298px;width:26px;height:22px;background:#c4c4c4;border-left:1px solid #fff;border-top:1px solid #fff;border-right:1px solid #808080;border-bottom:1px solid #808080;line-height:23px">1000</div><div style="left:795px;top:298px;width:27px;height:22px;background:#c4c4c4;border-left:1px solid #fff;border-top:1px solid #fff;border-right:1px solid #808080;border-bottom:1px solid #808080;line-height:23px">1111</div><div style="left:822px;top:298px;width:26px;height:22px;background:#c4c4c4;border-left:1px solid #fff;border-top:1px solid #fff;border-right:1px solid #808080;border-bottom:1px solid #808080;line-height:23px">1200</div><div style="left:848px;top:298px;width:27px;height:22px;background:#c4c4c4;border-left:1px solid #fff;border-top:1px solid #fff;border-right:1px solid #808080;border-bottom:1px solid #808080;line-height:23px">1500</div><div style="left:875px;top:298px;width:26px;height:22px;background:#c4c4c4;border-left:1px solid #fff;border-top:1px solid #fff;border-right:1px solid #808080;border-bottom:1px solid #808080;line-height:23px">1800</div><div style="left:901px;top:298px;width:27px;height:22px;background:#c4c4c4;border-left:1px solid #fff;border-top:1px solid #fff;border-right:1px solid #808080;border-bottom:1px solid #808080;line-height:23px">2000</div><div style="left:928px;top:298px;width:26px;height:22px;background:#c4c4c4;border-left:1px solid #fff;border-top:1px solid #fff;border-right:1px solid #808080;border-bottom:1px solid #808080;line-height:23px">2400</div><div style="left:954px;top:298px;width:26px;height:22px;background:#c4c4c4;border-left:1px solid #fff;border-top:1px solid #fff;border-right:1px solid #808080;border-bottom:1px solid #808080;line-height:23px">2800</div><div style="left:980px;top:298px;width:27px;height:22px;background:#c4c4c4;border-left:1px solid #fff;border-top:1px solid #fff;border-right:1px solid #808080;border-bottom:1px solid #808080;line-height:23px">3200</div><div style="left:1007px;top:298px;width:26px;height:22px;background:#c4c4c4;border-left:1px solid #fff;border-top:1px solid #fff;border-right:1px solid #808080;border-bottom:1px solid #808080;line-height:23px">3600</div><div style="left:1033px;top:298px;width:27px;height:22px;background:#c4c4c4;border-left:1px solid #fff;border-top:1px solid #fff;border-right:1px solid #808080;border-bottom:1px solid #808080;line-height:23px">4000</div><div style="left:1060px;top:298px;width:26px;height:22px;background:#c4c4c4;border-left:1px solid #fff;border-top:1px solid #fff;border-right:1px solid #808080;border-bottom:1px solid #808080;line-height:23px">5000</div><div style="left:1086px;top:298px;width:27px;height:22px;background:#c4c4c4;border-left:1px solid #fff;border-top:1px solid #fff;border-right:1px solid #808080;border-bottom:1px solid #808080;line-height:23px">6000</div><div style="left:1113px;top:298px;width:26px;height:22px;background:#c4c4c4;border-left:1px solid #fff;border-top:1px solid #fff;border-right:1px solid #808080;border-bottom:1px solid #808080;line-height:23px">7000</div></div><svg width="1202" height="761" style="position:absolute;left:0;top:0"><polyline points="1117,111.5 1104,111.5 1096.5,115.5 1089,129 1082.5,155.5 1081,190 1079.5,243 1078.5,291.5" stroke="#0000ff" stroke-width="1.1" fill="none"/><rect x="1115.5" y="110.0" width="3" height="3" fill="#0000ff"/><rect x="1102.5" y="110.0" width="3" height="3" fill="#0000ff"/><rect x="1095.0" y="114.0" width="3" height="3" fill="#0000ff"/><rect x="1087.5" y="127.5" width="3" height="3" fill="#0000ff"/><rect x="1081.0" y="154.0" width="3" height="3" fill="#0000ff"/><rect x="1079.5" y="188.5" width="3" height="3" fill="#0000ff"/><rect x="1078.0" y="241.5" width="3" height="3" fill="#0000ff"/><rect x="1076.0" y="289.0" width="5" height="5" fill="#0000ff"/></svg><div style="position:absolute;left:642px;top:380px;width:543px;height:242px;border-top:2px solid #8c8c8c;border-left:2px solid #8c8c8c;border-right:1px solid #fff;border-bottom:1px solid #fff"></div><div style="position:absolute;left:652px;top:386px;white-space:pre;font-weight:bold;font-size:12px;line-height:12px">Spark_Table1</div><div style="position:absolute;left:820px;top:387px;width:1px;height:14px;background:#a0a0a0"></div><div style="position:absolute;left:679px;top:405px;width:503px;height:192px;background:#8a8a8a"></div><div style="left:0;top:0;font-size:10px;letter-spacing:0.6px;line-height:13px;text-align:center"><div style="left:679px;top:405px;width:30px;height:11px;background:rgb(139,230,136);color:#000;">27.8</div><div style="left:710px;top:405px;width:31px;height:11px;background:rgb(139,230,136);color:#000;">27.8</div><div style="left:742px;top:405px;width:30px;height:11px;background:rgb(139,230,136);color:#000;">27.8</div><div style="left:773px;top:405px;width:31px;height:11px;background:rgb(139,230,136);color:#000;">27.8</div><div style="left:805px;top:405px;width:30px;height:11px;background:rgb(139,230,136);color:#000;">27.8</div><div style="left:836px;top:405px;width:31px;height:11px;background:rgb(139,230,136);color:#000;">27.8</div><div style="left:868px;top:405px;width:30px;height:11px;background:rgb(139,230,136);color:#000;">27.8</div><div style="left:899px;top:405px;width:31px;height:11px;background:rgb(139,230,136);color:#000;">27.8</div><div style="left:931px;top:405px;width:30px;height:11px;background:rgb(136,211,162);color:#000;">24.8</div><div style="left:962px;top:405px;width:30px;height:11px;background:rgb(136,211,162);color:#000;">24.8</div><div style="left:993px;top:405px;width:31px;height:11px;background:rgb(136,211,162);color:#000;">24.8</div><div style="left:1025px;top:405px;width:30px;height:11px;background:rgb(136,211,162);color:#000;">24.8</div><div style="left:1056px;top:405px;width:31px;height:11px;background:rgb(136,211,162);color:#000;">24.8</div><div style="left:1088px;top:405px;width:30px;height:11px;background:rgb(136,211,162);color:#000;">24.8</div><div style="left:1119px;top:405px;width:31px;height:11px;background:rgb(136,211,162);color:#000;">24.8</div><div style="left:1151px;top:405px;width:30px;height:11px;background:rgb(136,211,162);color:#000;">24.8</div><div style="left:679px;top:417px;width:30px;height:11px;background:rgb(139,230,136);color:#000;">27.8</div><div style="left:710px;top:417px;width:31px;height:11px;background:rgb(139,230,136);color:#000;">27.8</div><div style="left:742px;top:417px;width:30px;height:11px;background:rgb(139,230,136);color:#000;">27.8</div><div style="left:773px;top:417px;width:31px;height:11px;background:rgb(139,230,136);color:#000;">27.8</div><div style="left:805px;top:417px;width:30px;height:11px;background:rgb(139,230,136);color:#000;">27.8</div><div style="left:836px;top:417px;width:31px;height:11px;background:rgb(139,230,136);color:#000;">27.8</div><div style="left:868px;top:417px;width:30px;height:11px;background:rgb(139,230,136);color:#000;">27.8</div><div style="left:899px;top:417px;width:31px;height:11px;background:rgb(139,230,136);color:#000;">27.8</div><div style="left:931px;top:417px;width:30px;height:11px;background:rgb(136,211,162);color:#000;">24.8</div><div style="left:962px;top:417px;width:30px;height:11px;background:rgb(136,211,162);color:#000;">24.8</div><div style="left:993px;top:417px;width:31px;height:11px;background:rgb(136,211,162);color:#000;">24.8</div><div style="left:1025px;top:417px;width:30px;height:11px;background:rgb(136,211,162);color:#000;">24.8</div><div style="left:1056px;top:417px;width:31px;height:11px;background:rgb(136,211,162);color:#000;">24.8</div><div style="left:1088px;top:417px;width:30px;height:11px;background:rgb(136,211,162);color:#000;">24.8</div><div style="left:1119px;top:417px;width:31px;height:11px;background:rgb(136,211,162);color:#000;">24.8</div><div style="left:1151px;top:417px;width:30px;height:11px;background:rgb(136,211,162);color:#000;">24.8</div><div style="left:679px;top:429px;width:30px;height:11px;background:rgb(139,230,136);color:#000;">27.8</div><div style="left:710px;top:429px;width:31px;height:11px;background:rgb(139,230,136);color:#000;">27.8</div><div style="left:742px;top:429px;width:30px;height:11px;background:rgb(139,230,136);color:#000;">27.8</div><div style="left:773px;top:429px;width:31px;height:11px;background:rgb(139,230,136);color:#000;">27.8</div><div style="left:805px;top:429px;width:30px;height:11px;background:rgb(139,230,136);color:#000;">27.8</div><div style="left:836px;top:429px;width:31px;height:11px;background:rgb(139,230,136);color:#000;">27.8</div><div style="left:868px;top:429px;width:30px;height:11px;background:rgb(139,230,136);color:#000;">27.8</div><div style="left:899px;top:429px;width:31px;height:11px;background:rgb(139,230,136);color:#000;">27.8</div><div style="left:931px;top:429px;width:30px;height:11px;background:rgb(136,211,162);color:#000;">24.8</div><div style="left:962px;top:429px;width:30px;height:11px;background:rgb(136,211,162);color:#000;">24.8</div><div style="left:993px;top:429px;width:31px;height:11px;background:rgb(136,211,162);color:#000;">24.8</div><div style="left:1025px;top:429px;width:30px;height:11px;background:rgb(136,211,162);color:#000;">24.8</div><div style="left:1056px;top:429px;width:31px;height:11px;background:rgb(136,211,162);color:#000;">24.8</div><div style="left:1088px;top:429px;width:30px;height:11px;background:rgb(136,211,162);color:#000;">24.8</div><div style="left:1119px;top:429px;width:31px;height:11px;background:rgb(136,211,162);color:#000;">24.8</div><div style="left:1151px;top:429px;width:30px;height:11px;background:rgb(136,211,162);color:#000;">24.8</div><div style="left:679px;top:441px;width:30px;height:11px;background:rgb(179,197,136);color:#000;">32.0</div><div style="left:710px;top:441px;width:31px;height:11px;background:rgb(139,230,136);color:#000;">27.8</div><div style="left:742px;top:441px;width:30px;height:11px;background:rgb(139,230,136);color:#000;">27.8</div><div style="left:773px;top:441px;width:31px;height:11px;background:rgb(139,230,136);color:#000;">27.8</div><div style="left:805px;top:441px;width:30px;height:11px;background:rgb(139,230,136);color:#000;">27.8</div><div style="left:836px;top:441px;width:31px;height:11px;background:rgb(139,230,136);color:#000;">27.8</div><div style="left:868px;top:441px;width:30px;height:11px;background:rgb(139,230,136);color:#000;">27.8</div><div style="left:899px;top:441px;width:31px;height:11px;background:rgb(139,230,136);color:#000;">27.8</div><div style="left:931px;top:441px;width:30px;height:11px;background:rgb(136,211,162);color:#000;">24.8</div><div style="left:962px;top:441px;width:30px;height:11px;background:rgb(136,211,162);color:#000;">24.8</div><div style="left:993px;top:441px;width:31px;height:11px;background:rgb(136,211,162);color:#000;">24.8</div><div style="left:1025px;top:441px;width:30px;height:11px;background:rgb(136,211,162);color:#000;">24.8</div><div style="left:1056px;top:441px;width:31px;height:11px;background:rgb(136,211,162);color:#000;">24.8</div><div style="left:1088px;top:441px;width:30px;height:11px;background:rgb(136,211,162);color:#000;">24.8</div><div style="left:1119px;top:441px;width:31px;height:11px;background:rgb(136,211,162);color:#000;">24.8</div><div style="left:1151px;top:441px;width:30px;height:11px;background:rgb(136,211,162);color:#000;">24.8</div><div style="left:679px;top:453px;width:30px;height:11px;background:rgb(136,136,255);color:#000;">15.0</div><div style="left:710px;top:453px;width:31px;height:11px;background:rgb(139,230,136);color:#000;">27.8</div><div style="left:742px;top:453px;width:30px;height:11px;background:rgb(139,230,136);color:#000;">27.8</div><div style="left:773px;top:453px;width:31px;height:11px;background:rgb(139,230,136);color:#000;">27.8</div><div style="left:805px;top:453px;width:30px;height:11px;background:rgb(165,209,136);color:#000;">30.5</div><div style="left:836px;top:453px;width:31px;height:11px;background:rgb(165,209,136);color:#000;">30.5</div><div style="left:868px;top:453px;width:30px;height:11px;background:rgb(165,209,136);color:#000;">30.5</div><div style="left:899px;top:453px;width:31px;height:11px;background:rgb(165,209,136);color:#000;">30.5</div><div style="left:931px;top:453px;width:30px;height:11px;background:rgb(139,230,136);color:#000;">27.8</div><div style="left:962px;top:453px;width:30px;height:11px;background:rgb(139,230,136);color:#000;">27.8</div><div style="left:993px;top:453px;width:31px;height:11px;background:rgb(139,230,136);color:#000;">27.8</div><div style="left:1025px;top:453px;width:30px;height:11px;background:rgb(139,230,136);color:#000;">27.8</div><div style="left:1056px;top:453px;width:31px;height:11px;background:rgb(139,230,136);color:#000;">27.8</div><div style="left:1088px;top:453px;width:30px;height:11px;background:rgb(139,230,136);color:#000;">27.8</div><div style="left:1119px;top:453px;width:31px;height:11px;background:rgb(139,230,136);color:#000;">27.8</div><div style="left:1151px;top:453px;width:30px;height:11px;background:rgb(139,230,136);color:#000;">27.8</div><div style="left:679px;top:465px;width:30px;height:11px;background:rgb(136,136,255);color:#000;">15.0</div><div style="left:710px;top:465px;width:31px;height:11px;background:rgb(139,230,136);color:#000;">27.8</div><div style="left:742px;top:465px;width:30px;height:11px;background:rgb(139,230,136);color:#000;">27.8</div><div style="left:773px;top:465px;width:31px;height:11px;background:rgb(139,230,136);color:#000;">27.8</div><div style="left:805px;top:465px;width:30px;height:11px;background:rgb(165,209,136);color:#000;">30.5</div><div style="left:836px;top:465px;width:31px;height:11px;background:rgb(165,209,136);color:#000;">30.5</div><div style="left:868px;top:465px;width:30px;height:11px;background:rgb(165,209,136);color:#000;">30.5</div><div style="left:899px;top:465px;width:31px;height:11px;background:rgb(165,209,136);color:#000;">30.5</div><div style="left:931px;top:465px;width:30px;height:11px;background:rgb(139,230,136);color:#000;">27.8</div><div style="left:962px;top:465px;width:30px;height:11px;background:rgb(139,230,136);color:#000;">27.8</div><div style="left:993px;top:465px;width:31px;height:11px;background:rgb(139,230,136);color:#000;">27.8</div><div style="left:1025px;top:465px;width:30px;height:11px;background:rgb(139,230,136);color:#000;">27.8</div><div style="left:1056px;top:465px;width:31px;height:11px;background:rgb(139,230,136);color:#000;">27.8</div><div style="left:1088px;top:465px;width:30px;height:11px;background:rgb(139,230,136);color:#000;">27.8</div><div style="left:1119px;top:465px;width:31px;height:11px;background:rgb(139,230,136);color:#000;">27.8</div><div style="left:1151px;top:465px;width:30px;height:11px;background:rgb(139,230,136);color:#000;">27.8</div><div style="left:679px;top:477px;width:30px;height:11px;background:rgb(136,136,255);color:#000;">15.0</div><div style="left:710px;top:477px;width:31px;height:11px;background:rgb(139,230,136);color:#000;">27.8</div><div style="left:742px;top:477px;width:30px;height:11px;background:rgb(139,230,136);color:#000;">27.8</div><div style="left:773px;top:477px;width:31px;height:11px;background:rgb(139,230,136);color:#000;">27.8</div><div style="left:805px;top:477px;width:30px;height:11px;background:rgb(165,209,136);color:#000;">30.5</div><div style="left:836px;top:477px;width:31px;height:11px;background:rgb(165,209,136);color:#000;">30.5</div><div style="left:868px;top:477px;width:30px;height:11px;background:rgb(165,209,136);color:#000;">30.5</div><div style="left:899px;top:477px;width:31px;height:11px;background:rgb(165,209,136);color:#000;">30.5</div><div style="left:931px;top:477px;width:30px;height:11px;background:rgb(165,209,136);color:#000;">30.5</div><div style="left:962px;top:477px;width:30px;height:11px;background:rgb(165,209,136);color:#000;">30.5</div><div style="left:993px;top:477px;width:31px;height:11px;background:rgb(165,209,136);color:#000;">30.5</div><div style="left:1025px;top:477px;width:30px;height:11px;background:rgb(165,209,136);color:#000;">30.5</div><div style="left:1056px;top:477px;width:31px;height:11px;background:rgb(165,209,136);color:#000;">30.5</div><div style="left:1088px;top:477px;width:30px;height:11px;background:rgb(165,209,136);color:#000;">30.5</div><div style="left:1119px;top:477px;width:31px;height:11px;background:rgb(165,209,136);color:#000;">30.5</div><div style="left:1151px;top:477px;width:30px;height:11px;background:rgb(165,209,136);color:#000;">30.5</div><div style="left:679px;top:489px;width:30px;height:11px;background:rgb(136,136,255);color:#000;">15.0</div><div style="left:710px;top:489px;width:31px;height:11px;background:rgb(139,230,136);color:#000;">27.8</div><div style="left:742px;top:489px;width:30px;height:11px;background:rgb(139,230,136);color:#000;">27.8</div><div style="left:773px;top:489px;width:31px;height:11px;background:rgb(139,230,136);color:#000;">27.8</div><div style="left:805px;top:489px;width:30px;height:11px;background:rgb(165,209,136);color:#000;">30.5</div><div style="left:836px;top:489px;width:31px;height:11px;background:rgb(179,197,136);color:#000;">32.0</div><div style="left:868px;top:489px;width:30px;height:11px;background:rgb(179,197,136);color:#000;">32.0</div><div style="left:899px;top:489px;width:31px;height:11px;background:rgb(179,197,136);color:#000;">32.0</div><div style="left:931px;top:489px;width:30px;height:11px;background:rgb(179,197,136);color:#000;">32.0</div><div style="left:962px;top:489px;width:30px;height:11px;background:rgb(179,197,136);color:#000;">32.0</div><div style="left:993px;top:489px;width:31px;height:11px;background:rgb(179,197,136);color:#000;">32.0</div><div style="left:1025px;top:489px;width:30px;height:11px;background:rgb(179,197,136);color:#000;">32.0</div><div style="left:1056px;top:489px;width:31px;height:11px;background:rgb(179,197,136);color:#000;">32.0</div><div style="left:1088px;top:489px;width:30px;height:11px;background:#e4e41c;color:#000;">32.0</div><div style="left:1119px;top:489px;width:31px;height:11px;background:#e4e41c;color:#000;">32.0</div><div style="left:1151px;top:489px;width:30px;height:11px;background:rgb(179,197,136);color:#000;">32.0</div><div style="left:679px;top:501px;width:30px;height:11px;background:rgb(136,136,255);color:#000;">15.0</div><div style="left:710px;top:501px;width:31px;height:11px;background:rgb(136,228,141);color:#000;">27.0</div><div style="left:742px;top:501px;width:30px;height:11px;background:rgb(136,228,141);color:#000;">27.0</div><div style="left:773px;top:501px;width:31px;height:11px;background:rgb(165,209,136);color:#000;">30.5</div><div style="left:805px;top:501px;width:30px;height:11px;background:rgb(191,187,136);color:#000;">33.3</div><div style="left:836px;top:501px;width:31px;height:11px;background:rgb(191,187,136);color:#000;">33.3</div><div style="left:868px;top:501px;width:30px;height:11px;background:rgb(198,182,136);color:#000;">34.0</div><div style="left:899px;top:501px;width:31px;height:11px;background:rgb(188,190,136);color:#000;">33.0</div><div style="left:931px;top:501px;width:30px;height:11px;background:rgb(188,190,136);color:#000;">33.0</div><div style="left:962px;top:501px;width:30px;height:11px;background:rgb(188,190,136);color:#000;">33.0</div><div style="left:993px;top:501px;width:31px;height:11px;background:rgb(188,190,136);color:#000;">33.0</div><div style="left:1025px;top:501px;width:30px;height:11px;background:rgb(188,190,136);color:#000;">33.0</div><div style="left:1056px;top:501px;width:31px;height:11px;background:rgb(188,190,136);color:#000;">33.0</div><div style="left:1088px;top:501px;width:30px;height:11px;background:rgb(188,190,136);color:#000;">33.0</div><div style="left:1119px;top:501px;width:31px;height:11px;background:rgb(188,190,136);color:#000;">33.0</div><div style="left:1151px;top:501px;width:30px;height:11px;background:rgb(188,190,136);color:#000;">33.0</div><div style="left:679px;top:513px;width:30px;height:11px;background:rgb(136,220,150);color:#000;">26.0</div><div style="left:710px;top:513px;width:31px;height:11px;background:rgb(136,220,150);color:#000;">26.0</div><div style="left:742px;top:513px;width:30px;height:11px;background:rgb(136,220,150);color:#000;">26.0</div><div style="left:773px;top:513px;width:31px;height:11px;background:rgb(191,187,136);color:#000;">33.3</div><div style="left:805px;top:513px;width:30px;height:11px;background:rgb(191,187,136);color:#000;">33.3</div><div style="left:836px;top:513px;width:31px;height:11px;background:rgb(198,182,136);color:#000;">34.0</div><div style="left:868px;top:513px;width:30px;height:11px;background:rgb(207,174,136);color:#000;">35.0</div><div style="left:899px;top:513px;width:31px;height:11px;background:rgb(198,182,136);color:#000;">34.0</div><div style="left:931px;top:513px;width:30px;height:11px;background:rgb(198,182,136);color:#000;">34.0</div><div style="left:962px;top:513px;width:30px;height:11px;background:rgb(198,182,136);color:#000;">34.0</div><div style="left:993px;top:513px;width:31px;height:11px;background:rgb(198,182,136);color:#000;">34.0</div><div style="left:1025px;top:513px;width:30px;height:11px;background:rgb(198,182,136);color:#000;">34.0</div><div style="left:1056px;top:513px;width:31px;height:11px;background:rgb(198,182,136);color:#000;">34.0</div><div style="left:1088px;top:513px;width:30px;height:11px;background:rgb(198,182,136);color:#000;">34.0</div><div style="left:1119px;top:513px;width:31px;height:11px;background:rgb(198,182,136);color:#000;">34.0</div><div style="left:1151px;top:513px;width:30px;height:11px;background:rgb(198,182,136);color:#000;">34.0</div><div style="left:679px;top:525px;width:30px;height:11px;background:rgb(136,190,188);color:#000;">22.0</div><div style="left:710px;top:525px;width:31px;height:11px;background:rgb(136,190,188);color:#000;">22.0</div><div style="left:742px;top:525px;width:30px;height:11px;background:rgb(136,190,188);color:#000;">22.0</div><div style="left:773px;top:525px;width:31px;height:11px;background:rgb(141,228,136);color:#000;">28.0</div><div style="left:805px;top:525px;width:30px;height:11px;background:rgb(198,182,136);color:#000;">34.0</div><div style="left:836px;top:525px;width:31px;height:11px;background:rgb(207,174,136);color:#000;">35.0</div><div style="left:868px;top:525px;width:30px;height:11px;background:rgb(217,167,136);color:#000;">36.0</div><div style="left:899px;top:525px;width:31px;height:11px;background:rgb(217,167,136);color:#000;">36.0</div><div style="left:931px;top:525px;width:30px;height:11px;background:rgb(217,167,136);color:#000;">36.0</div><div style="left:962px;top:525px;width:30px;height:11px;background:rgb(217,167,136);color:#000;">36.0</div><div style="left:993px;top:525px;width:31px;height:11px;background:rgb(217,167,136);color:#000;">36.0</div><div style="left:1025px;top:525px;width:30px;height:11px;background:rgb(217,167,136);color:#000;">36.0</div><div style="left:1056px;top:525px;width:31px;height:11px;background:rgb(217,167,136);color:#000;">36.0</div><div style="left:1088px;top:525px;width:30px;height:11px;background:rgb(217,167,136);color:#000;">36.0</div><div style="left:1119px;top:525px;width:31px;height:11px;background:rgb(217,167,136);color:#000;">36.0</div><div style="left:1151px;top:525px;width:30px;height:11px;background:rgb(217,167,136);color:#000;">36.0</div><div style="left:679px;top:537px;width:30px;height:11px;background:rgb(136,159,226);color:#000;">18.0</div><div style="left:710px;top:537px;width:31px;height:11px;background:rgb(136,159,226);color:#000;">18.0</div><div style="left:742px;top:537px;width:30px;height:11px;background:rgb(136,159,226);color:#000;">18.0</div><div style="left:773px;top:537px;width:31px;height:11px;background:rgb(136,213,160);color:#000;">25.0</div><div style="left:805px;top:537px;width:30px;height:11px;background:rgb(207,174,136);color:#000;">35.0</div><div style="left:836px;top:537px;width:31px;height:11px;background:rgb(217,167,136);color:#000;">36.0</div><div style="left:868px;top:537px;width:30px;height:11px;background:rgb(236,151,136);color:#000;">38.0</div><div style="left:899px;top:537px;width:31px;height:11px;background:rgb(255,136,136);color:#000;">40.0</div><div style="left:931px;top:537px;width:30px;height:11px;background:rgb(255,136,136);color:#000;">40.0</div><div style="left:962px;top:537px;width:30px;height:11px;background:rgb(255,136,136);color:#000;">40.0</div><div style="left:993px;top:537px;width:31px;height:11px;background:rgb(255,136,136);color:#000;">40.0</div><div style="left:1025px;top:537px;width:30px;height:11px;background:rgb(255,136,136);color:#000;">40.0</div><div style="left:1056px;top:537px;width:31px;height:11px;background:rgb(255,136,136);color:#000;">40.0</div><div style="left:1088px;top:537px;width:30px;height:11px;background:rgb(255,136,136);color:#000;">40.0</div><div style="left:1119px;top:537px;width:31px;height:11px;background:rgb(255,136,136);color:#000;">40.0</div><div style="left:1151px;top:537px;width:30px;height:11px;background:rgb(255,136,136);color:#000;">40.0</div><div style="left:679px;top:549px;width:30px;height:11px;background:rgb(136,159,226);color:#000;">18.0</div><div style="left:710px;top:549px;width:31px;height:11px;background:rgb(136,159,226);color:#000;">18.0</div><div style="left:742px;top:549px;width:30px;height:11px;background:rgb(136,159,226);color:#000;">18.0</div><div style="left:773px;top:549px;width:31px;height:11px;background:rgb(136,190,188);color:#000;">22.0</div><div style="left:805px;top:549px;width:30px;height:11px;background:rgb(188,190,136);color:#000;">33.0</div><div style="left:836px;top:549px;width:31px;height:11px;background:rgb(207,174,136);color:#000;">35.0</div><div style="left:868px;top:549px;width:30px;height:11px;background:rgb(245,144,136);color:#000;">39.0</div><div style="left:899px;top:549px;width:31px;height:11px;background:rgb(255,136,136);color:#000;">40.0</div><div style="left:931px;top:549px;width:30px;height:11px;background:rgb(255,136,136);color:#000;">40.0</div><div style="left:962px;top:549px;width:30px;height:11px;background:rgb(255,136,136);color:#000;">40.0</div><div style="left:993px;top:549px;width:31px;height:11px;background:rgb(255,136,136);color:#000;">40.0</div><div style="left:1025px;top:549px;width:30px;height:11px;background:rgb(255,136,136);color:#000;">40.0</div><div style="left:1056px;top:549px;width:31px;height:11px;background:rgb(255,136,136);color:#000;">40.0</div><div style="left:1088px;top:549px;width:30px;height:11px;background:rgb(255,136,136);color:#000;">40.0</div><div style="left:1119px;top:549px;width:31px;height:11px;background:rgb(255,136,136);color:#000;">40.0</div><div style="left:1151px;top:549px;width:30px;height:11px;background:rgb(255,136,136);color:#000;">40.0</div><div style="left:679px;top:561px;width:30px;height:11px;background:rgb(136,159,226);color:#000;">18.0</div><div style="left:710px;top:561px;width:31px;height:11px;background:rgb(136,159,226);color:#000;">18.0</div><div style="left:742px;top:561px;width:30px;height:11px;background:rgb(136,159,226);color:#000;">18.0</div><div style="left:773px;top:561px;width:31px;height:11px;background:rgb(136,190,188);color:#000;">22.0</div><div style="left:805px;top:561px;width:30px;height:11px;background:rgb(188,190,136);color:#000;">33.0</div><div style="left:836px;top:561px;width:31px;height:11px;background:rgb(207,174,136);color:#000;">35.0</div><div style="left:868px;top:561px;width:30px;height:11px;background:rgb(245,144,136);color:#000;">39.0</div><div style="left:899px;top:561px;width:31px;height:11px;background:rgb(255,136,136);color:#000;">40.0</div><div style="left:931px;top:561px;width:30px;height:11px;background:rgb(255,136,136);color:#000;">40.0</div><div style="left:962px;top:561px;width:30px;height:11px;background:rgb(255,136,136);color:#000;">40.0</div><div style="left:993px;top:561px;width:31px;height:11px;background:rgb(255,136,136);color:#000;">40.0</div><div style="left:1025px;top:561px;width:30px;height:11px;background:rgb(255,136,136);color:#000;">40.0</div><div style="left:1056px;top:561px;width:31px;height:11px;background:rgb(255,136,136);color:#000;">40.0</div><div style="left:1088px;top:561px;width:30px;height:11px;background:rgb(255,136,136);color:#000;">40.0</div><div style="left:1119px;top:561px;width:31px;height:11px;background:rgb(255,136,136);color:#000;">40.0</div><div style="left:1151px;top:561px;width:30px;height:11px;background:rgb(255,136,136);color:#000;">40.0</div><div style="left:679px;top:573px;width:30px;height:11px;background:rgb(136,159,226);color:#000;">18.0</div><div style="left:710px;top:573px;width:31px;height:11px;background:rgb(136,159,226);color:#000;">18.0</div><div style="left:742px;top:573px;width:30px;height:11px;background:rgb(136,159,226);color:#000;">18.0</div><div style="left:773px;top:573px;width:31px;height:11px;background:rgb(136,190,188);color:#000;">22.0</div><div style="left:805px;top:573px;width:30px;height:11px;background:rgb(188,190,136);color:#000;">33.0</div><div style="left:836px;top:573px;width:31px;height:11px;background:rgb(207,174,136);color:#000;">35.0</div><div style="left:868px;top:573px;width:30px;height:11px;background:rgb(245,144,136);color:#000;">39.0</div><div style="left:899px;top:573px;width:31px;height:11px;background:rgb(255,136,136);color:#000;">40.0</div><div style="left:931px;top:573px;width:30px;height:11px;background:rgb(255,136,136);color:#000;">40.0</div><div style="left:962px;top:573px;width:30px;height:11px;background:rgb(255,136,136);color:#000;">40.0</div><div style="left:993px;top:573px;width:31px;height:11px;background:rgb(255,136,136);color:#000;">40.0</div><div style="left:1025px;top:573px;width:30px;height:11px;background:rgb(255,136,136);color:#000;">40.0</div><div style="left:1056px;top:573px;width:31px;height:11px;background:rgb(255,136,136);color:#000;">40.0</div><div style="left:1088px;top:573px;width:30px;height:11px;background:rgb(255,136,136);color:#000;">40.0</div><div style="left:1119px;top:573px;width:31px;height:11px;background:rgb(255,136,136);color:#000;">40.0</div><div style="left:1151px;top:573px;width:30px;height:11px;background:rgb(255,136,136);color:#000;">40.0</div><div style="left:679px;top:585px;width:30px;height:11px;background:rgb(136,190,188);color:#000;">22.0</div><div style="left:710px;top:585px;width:31px;height:11px;background:rgb(136,159,226);color:#000;">18.0</div><div style="left:742px;top:585px;width:30px;height:11px;background:rgb(136,159,226);color:#000;">18.0</div><div style="left:773px;top:585px;width:31px;height:11px;background:rgb(136,190,188);color:#000;">22.0</div><div style="left:805px;top:585px;width:30px;height:11px;background:rgb(141,228,136);color:#000;">28.0</div><div style="left:836px;top:585px;width:31px;height:11px;background:rgb(188,190,136);color:#000;">33.0</div><div style="left:868px;top:585px;width:30px;height:11px;background:rgb(245,144,136);color:#000;">39.0</div><div style="left:899px;top:585px;width:31px;height:11px;background:rgb(255,136,136);color:#000;">40.0</div><div style="left:931px;top:585px;width:30px;height:11px;background:rgb(255,136,136);color:#000;">40.0</div><div style="left:962px;top:585px;width:30px;height:11px;background:rgb(255,136,136);color:#000;">40.0</div><div style="left:993px;top:585px;width:31px;height:11px;background:rgb(255,136,136);color:#000;">40.0</div><div style="left:1025px;top:585px;width:30px;height:11px;background:rgb(255,136,136);color:#000;">40.0</div><div style="left:1056px;top:585px;width:31px;height:11px;background:rgb(255,136,136);color:#000;">40.0</div><div style="left:1088px;top:585px;width:30px;height:11px;background:rgb(255,136,136);color:#000;">40.0</div><div style="left:1119px;top:585px;width:31px;height:11px;background:rgb(255,136,136);color:#000;">40.0</div><div style="left:1151px;top:585px;width:30px;height:11px;background:rgb(255,136,136);color:#000;">40.0</div></div><div style="left:0;top:0;font-size:10px;letter-spacing:0.6px;text-align:center"><div style="left:646px;top:405px;width:30px;height:12px;background:#c4c4c4;border-top:1px solid #fff;border-left:1px solid #fff;border-bottom:2px solid #7a7a7a;line-height:9px">203</div><div style="left:646px;top:417px;width:30px;height:12px;background:#c4c4c4;border-top:1px solid #fff;border-left:1px solid #fff;border-bottom:2px solid #7a7a7a;line-height:9px">176</div><div style="left:646px;top:429px;width:30px;height:12px;background:#c4c4c4;border-top:1px solid #fff;border-left:1px solid #fff;border-bottom:2px solid #7a7a7a;line-height:9px">150</div><div style="left:646px;top:441px;width:30px;height:12px;background:#c4c4c4;border-top:1px solid #fff;border-left:1px solid #fff;border-bottom:2px solid #7a7a7a;line-height:9px">125</div><div style="left:646px;top:453px;width:30px;height:12px;background:#c4c4c4;border-top:1px solid #fff;border-left:1px solid #fff;border-bottom:2px solid #7a7a7a;line-height:9px">111</div><div style="left:646px;top:465px;width:30px;height:12px;background:#c4c4c4;border-top:1px solid #fff;border-left:1px solid #fff;border-bottom:2px solid #7a7a7a;line-height:9px">100</div><div style="left:646px;top:477px;width:30px;height:12px;background:#c4c4c4;border-top:1px solid #fff;border-left:1px solid #fff;border-bottom:2px solid #7a7a7a;line-height:9px">90</div><div style="left:646px;top:489px;width:30px;height:12px;background:#c4c4c4;border-top:1px solid #fff;border-left:1px solid #fff;border-bottom:2px solid #7a7a7a;line-height:9px">81</div><div style="left:646px;top:501px;width:30px;height:12px;background:#c4c4c4;border-top:1px solid #fff;border-left:1px solid #fff;border-bottom:2px solid #7a7a7a;line-height:9px">70</div><div style="left:646px;top:513px;width:30px;height:12px;background:#c4c4c4;border-top:1px solid #fff;border-left:1px solid #fff;border-bottom:2px solid #7a7a7a;line-height:9px">65</div><div style="left:646px;top:525px;width:30px;height:12px;background:#c4c4c4;border-top:1px solid #fff;border-left:1px solid #fff;border-bottom:2px solid #7a7a7a;line-height:9px">60</div><div style="left:646px;top:537px;width:30px;height:12px;background:#c4c4c4;border-top:1px solid #fff;border-left:1px solid #fff;border-bottom:2px solid #7a7a7a;line-height:9px">56</div><div style="left:646px;top:549px;width:30px;height:12px;background:#c4c4c4;border-top:1px solid #fff;border-left:1px solid #fff;border-bottom:2px solid #7a7a7a;line-height:9px">50</div><div style="left:646px;top:561px;width:30px;height:12px;background:#c4c4c4;border-top:1px solid #fff;border-left:1px solid #fff;border-bottom:2px solid #7a7a7a;line-height:9px">45</div><div style="left:646px;top:573px;width:30px;height:12px;background:#c4c4c4;border-top:1px solid #fff;border-left:1px solid #fff;border-bottom:2px solid #7a7a7a;line-height:9px">41</div><div style="left:646px;top:585px;width:30px;height:12px;background:#c4c4c4;border-top:1px solid #fff;border-left:1px solid #fff;border-bottom:2px solid #7a7a7a;line-height:9px">28</div></div><div style="position:absolute;left:676px;top:405px;width:2px;height:192px;background:#808080"></div><div style="position:absolute;left:646px;top:597px;width:32px;height:22px;background:#c4c4c4"></div><div style="position:absolute;left:677px;top:597px;width:505px;height:1px;background:#fff"></div><div style="left:0;top:0;font-size:10px;letter-spacing:0.6px;text-align:center"><div style="left:678px;top:597px;width:32px;height:22px;background:#c4c4c4;border-left:1px solid #fff;border-top:1px solid #fff;border-right:1px solid #808080;border-bottom:1px solid #808080;line-height:23px">600</div><div style="left:710px;top:597px;width:32px;height:22px;background:#c4c4c4;border-left:1px solid #fff;border-top:1px solid #fff;border-right:1px solid #808080;border-bottom:1px solid #808080;line-height:23px">800</div><div style="left:742px;top:597px;width:31px;height:22px;background:#c4c4c4;border-left:1px solid #fff;border-top:1px solid #fff;border-right:1px solid #808080;border-bottom:1px solid #808080;line-height:23px">1000</div><div style="left:773px;top:597px;width:32px;height:22px;background:#c4c4c4;border-left:1px solid #fff;border-top:1px solid #fff;border-right:1px solid #808080;border-bottom:1px solid #808080;line-height:23px">1111</div><div style="left:805px;top:597px;width:31px;height:22px;background:#c4c4c4;border-left:1px solid #fff;border-top:1px solid #fff;border-right:1px solid #808080;border-bottom:1px solid #808080;line-height:23px">1200</div><div style="left:836px;top:597px;width:32px;height:22px;background:#c4c4c4;border-left:1px solid #fff;border-top:1px solid #fff;border-right:1px solid #808080;border-bottom:1px solid #808080;line-height:23px">1500</div><div style="left:868px;top:597px;width:31px;height:22px;background:#c4c4c4;border-left:1px solid #fff;border-top:1px solid #fff;border-right:1px solid #808080;border-bottom:1px solid #808080;line-height:23px">1800</div><div style="left:899px;top:597px;width:32px;height:22px;background:#c4c4c4;border-left:1px solid #fff;border-top:1px solid #fff;border-right:1px solid #808080;border-bottom:1px solid #808080;line-height:23px">2000</div><div style="left:931px;top:597px;width:31px;height:22px;background:#c4c4c4;border-left:1px solid #fff;border-top:1px solid #fff;border-right:1px solid #808080;border-bottom:1px solid #808080;line-height:23px">2400</div><div style="left:962px;top:597px;width:31px;height:22px;background:#c4c4c4;border-left:1px solid #fff;border-top:1px solid #fff;border-right:1px solid #808080;border-bottom:1px solid #808080;line-height:23px">2800</div><div style="left:993px;top:597px;width:32px;height:22px;background:#c4c4c4;border-left:1px solid #fff;border-top:1px solid #fff;border-right:1px solid #808080;border-bottom:1px solid #808080;line-height:23px">3200</div><div style="left:1025px;top:597px;width:31px;height:22px;background:#c4c4c4;border-left:1px solid #fff;border-top:1px solid #fff;border-right:1px solid #808080;border-bottom:1px solid #808080;line-height:23px">3600</div><div style="left:1056px;top:597px;width:32px;height:22px;background:#c4c4c4;border-left:1px solid #fff;border-top:1px solid #fff;border-right:1px solid #808080;border-bottom:1px solid #808080;line-height:23px">4000</div><div style="left:1088px;top:597px;width:31px;height:22px;background:#c4c4c4;border-left:1px solid #fff;border-top:1px solid #fff;border-right:1px solid #808080;border-bottom:1px solid #808080;line-height:23px">5000</div><div style="left:1119px;top:597px;width:32px;height:22px;background:#c4c4c4;border-left:1px solid #fff;border-top:1px solid #fff;border-right:1px solid #808080;border-bottom:1px solid #808080;line-height:23px">6000</div><div style="left:1151px;top:597px;width:31px;height:22px;background:#c4c4c4;border-left:1px solid #fff;border-top:1px solid #fff;border-right:1px solid #808080;border-bottom:1px solid #808080;line-height:23px">7000</div></div><svg width="1202" height="761" style="position:absolute;left:0;top:0"><polyline points="1155.5,411.5 1140.5,411.5 1132.5,412.5 1123.5,419.5 1115.5,433.5 1113,470 1111.5,477.5 1110.5,495" stroke="#0000ff" stroke-width="1.1" fill="none"/><rect x="1154.0" y="410.0" width="3" height="3" fill="#0000ff"/><rect x="1139.0" y="410.0" width="3" height="3" fill="#0000ff"/><rect x="1131.0" y="411.0" width="3" height="3" fill="#0000ff"/><rect x="1122.0" y="418.0" width="3" height="3" fill="#0000ff"/><rect x="1114.0" y="432.0" width="3" height="3" fill="#0000ff"/><rect x="1111.5" y="468.5" width="3" height="3" fill="#0000ff"/><rect x="1110.0" y="476.0" width="3" height="3" fill="#0000ff"/><rect x="1108.0" y="492.5" width="5" height="5" fill="#0000ff"/></svg><svg width="1202" height="761" style="position:absolute;left:0;top:0"><defs><linearGradient id="btg" x1="0" y1="0" x2="0" y2="1"><stop offset="0" stop-color="#fdfdfd"/><stop offset="0.45" stop-color="#ededed"/><stop offset="0.5" stop-color="#dcdcdc"/><stop offset="1" stop-color="#d0d0d0"/></linearGradient><radialGradient id="grg" cx="0.4" cy="0.35" r="0.7"><stop offset="0" stop-color="#9ee86a"/><stop offset="0.6" stop-color="#5cc93a"/><stop offset="1" stop-color="#3a9e22"/></radialGradient></defs><rect x="953.5" y="87.5" width="15" height="15" rx="2.5" fill="#f0f0f0" stroke="#808080" stroke-width="1"/><circle cx="961" cy="95" r="7" fill="url(#grg)"/><polygon points="961,89 966,95 963,95 963,100 959,100 959,95 956,95" fill="#fff" transform="rotate(-12 961 95)"/><rect x="974.5" y="87.5" width="15" height="15" rx="2.5" fill="#f0f0f0" stroke="#808080" stroke-width="1"/><circle cx="982" cy="95" r="7" fill="url(#grg)"/><polygon points="982,101 987,95 984,95 984,90 980,90 980,95 977,95" fill="#fff" transform="rotate(-12 982 95)"/><rect x="995.5" y="87.5" width="15" height="15" rx="2.5" fill="url(#btg)" stroke="#808080" stroke-width="1"/><rect x="999.5" y="93" width="7" height="1.5" fill="#000"/><rect x="999.5" y="96" width="7" height="1.5" fill="#000"/><rect x="1016.5" y="87.5" width="15" height="15" rx="2.5" fill="url(#btg)" stroke="#808080" stroke-width="1"/><path d="M1024 90.5 L1019.5 98.5 L1028.5 98.5 Z" fill="#000"/><rect x="1037.5" y="87.5" width="15" height="15" rx="2.5" fill="url(#btg)" stroke="#808080" stroke-width="1"/><path d="M1040.5 91 H1049.5 V93.5 L1045.5 99.5 L1044.5 99.5 V93.5 Z" fill="#000"/><rect x="1058.5" y="87.5" width="15" height="15" rx="2.5" fill="url(#btg)" stroke="#808080" stroke-width="1"/><rect x="1061.5" y="94.3" width="9" height="1.6" fill="#000"/><rect x="1079.5" y="87.5" width="15" height="15" rx="2.5" fill="url(#btg)" stroke="#808080" stroke-width="1"/><rect x="1082.5" y="94.3" width="9" height="1.6" fill="#000"/><rect x="1086.2" y="90.5" width="1.6" height="9" fill="#000"/><rect x="1100.5" y="87.5" width="15" height="15" rx="2.5" fill="url(#btg)" stroke="#808080" stroke-width="1"/><path d="M1104.5 91 L1111.5 99 M1111.5 91 L1104.5 99 M1104 95 H1112" stroke="#000" stroke-width="1.4" fill="none"/><rect x="1121.5" y="87.5" width="15" height="15" rx="2.5" fill="url(#btg)" stroke="#808080" stroke-width="1"/><defs><linearGradient id="pen953" x1="0" y1="1" x2="1" y2="0"><stop offset="0" stop-color="#ff0000"/><stop offset="0.3" stop-color="#ff0000"/><stop offset="0.5" stop-color="#800080"/><stop offset="1" stop-color="#0000ff"/></linearGradient></defs><path d="M1125 99 L1133 91" stroke="url(#pen953)" stroke-width="3.5" stroke-linecap="square"/></svg><svg width="1202" height="761" style="position:absolute;left:0;top:0"><defs><linearGradient id="btg" x1="0" y1="0" x2="0" y2="1"><stop offset="0" stop-color="#fdfdfd"/><stop offset="0.45" stop-color="#ededed"/><stop offset="0.5" stop-color="#dcdcdc"/><stop offset="1" stop-color="#d0d0d0"/></linearGradient><radialGradient id="grg" cx="0.4" cy="0.35" r="0.7"><stop offset="0" stop-color="#9ee86a"/><stop offset="0.6" stop-color="#5cc93a"/><stop offset="1" stop-color="#3a9e22"/></radialGradient></defs><rect x="996.5" y="386.5" width="15" height="15" rx="2.5" fill="#f0f0f0" stroke="#808080" stroke-width="1"/><circle cx="1004" cy="394" r="7" fill="url(#grg)"/><polygon points="1004,388 1009,394 1006,394 1006,399 1002,399 1002,394 999,394" fill="#fff" transform="rotate(-12 1004 394)"/><rect x="1017.5" y="386.5" width="15" height="15" rx="2.5" fill="#f0f0f0" stroke="#808080" stroke-width="1"/><circle cx="1025" cy="394" r="7" fill="url(#grg)"/><polygon points="1025,400 1030,394 1027,394 1027,389 1023,389 1023,394 1020,394" fill="#fff" transform="rotate(-12 1025 394)"/><rect x="1038.5" y="386.5" width="15" height="15" rx="2.5" fill="url(#btg)" stroke="#808080" stroke-width="1"/><rect x="1042.5" y="392" width="7" height="1.5" fill="#000"/><rect x="1042.5" y="395" width="7" height="1.5" fill="#000"/><rect x="1059.5" y="386.5" width="15" height="15" rx="2.5" fill="url(#btg)" stroke="#808080" stroke-width="1"/><path d="M1067 389.5 L1062.5 397.5 L1071.5 397.5 Z" fill="#000"/><rect x="1080.5" y="386.5" width="15" height="15" rx="2.5" fill="url(#btg)" stroke="#808080" stroke-width="1"/><path d="M1083.5 390 H1092.5 V392.5 L1088.5 398.5 L1087.5 398.5 V392.5 Z" fill="#000"/><rect x="1101.5" y="386.5" width="15" height="15" rx="2.5" fill="url(#btg)" stroke="#808080" stroke-width="1"/><rect x="1104.5" y="393.3" width="9" height="1.6" fill="#000"/><rect x="1122.5" y="386.5" width="15" height="15" rx="2.5" fill="url(#btg)" stroke="#808080" stroke-width="1"/><rect x="1125.5" y="393.3" width="9" height="1.6" fill="#000"/><rect x="1129.2" y="389.5" width="1.6" height="9" fill="#000"/><rect x="1143.5" y="386.5" width="15" height="15" rx="2.5" fill="url(#btg)" stroke="#808080" stroke-width="1"/><path d="M1147.5 390 L1154.5 398 M1154.5 390 L1147.5 398 M1147 394 H1155" stroke="#000" stroke-width="1.4" fill="none"/><rect x="1164.5" y="386.5" width="15" height="15" rx="2.5" fill="url(#btg)" stroke="#808080" stroke-width="1"/><defs><linearGradient id="pen996" x1="0" y1="1" x2="1" y2="0"><stop offset="0" stop-color="#ff0000"/><stop offset="0.3" stop-color="#ff0000"/><stop offset="0.5" stop-color="#800080"/><stop offset="1" stop-color="#0000ff"/></linearGradient></defs><path d="M1168 398 L1176 390" stroke="url(#pen996)" stroke-width="3.5" stroke-linecap="square"/></svg><div style="position:absolute;left:715px;top:330px;width:130px;height:21px;border:1px solid #707070;border-radius:3px;background:linear-gradient(#f2f2f2,#ebebeb 45%,#dddddd 50%,#cfcfcf);box-shadow:inset 0 0 0 1px #fcfcfc"></div><div style="position:absolute;left:715px;top:334px;white-space:pre;width:130px;text-align:center;font-size:10.5px;line-height:12px">Open Tune File</div><div style="position:absolute;left:849px;top:330px;width:130px;height:21px;border:1px solid #707070;border-radius:3px;background:linear-gradient(#f2f2f2,#ebebeb 45%,#dddddd 50%,#cfcfcf);box-shadow:inset 0 0 0 1px #fcfcfc"></div><div style="position:absolute;left:849px;top:334px;white-space:pre;width:130px;text-align:center;font-size:10.5px;line-height:12px">Save Tune</div><div style="position:absolute;left:715px;top:353px;width:130px;height:21px;border:1px solid #707070;border-radius:3px;background:linear-gradient(#f2f2f2,#ebebeb 45%,#dddddd 50%,#cfcfcf);box-shadow:inset 0 0 0 1px #fcfcfc"></div><div style="position:absolute;left:715px;top:357px;white-space:pre;width:130px;text-align:center;font-size:10.5px;line-height:12px">VE Analyzer</div><div style="position:absolute;left:849px;top:353px;width:130px;height:21px;border:1px solid #707070;border-radius:3px;background:linear-gradient(#f2f2f2,#ebebeb 45%,#dddddd 50%,#cfcfcf);box-shadow:inset 0 0 0 1px #fcfcfc"></div><div style="position:absolute;left:849px;top:357px;white-space:pre;width:130px;text-align:center;font-size:10.5px;line-height:12px">Save Tune As</div><div style="position:absolute;left:982px;top:329px;width:1px;height:46px;background:#707070"></div><div style="position:absolute;left:982px;top:329px;width:132px;height:1px;background:#707070"></div><div style="position:absolute;left:982px;top:352px;width:132px;height:1px;background:#707070"></div><div style="position:absolute;left:982px;top:334px;white-space:pre;width:132px;text-align:center;font-weight:bold;font-size:13px;line-height:13px">Fuel_Table1</div><div style="position:absolute;left:982px;top:357px;white-space:pre;width:132px;text-align:center;font-weight:bold;font-size:13px;line-height:13px">Spark_Table1</div><div style="position:absolute;left:638px;top:629px;white-space:pre;font-size:10.7px;line-height:12px">D:\Development\Auto\MSGraph\logs\BigStuff\Sample.big</div><div style="position:absolute;left:11px;top:657px;white-space:pre;font-weight:bold;font-size:11.8px;line-height:12px">Record 189 of 2150 - Zoom: 2.0x - Play speed: 100.0%</div><div style="position:absolute;left:10px;top:672px;width:145px;height:19px;border-top:1px solid #8c8c8c;border-left:1px solid #8c8c8c;box-shadow:inset 1px 1px 0 #fff"></div><div style="position:absolute;left:46px;top:674px;white-space:pre;width:71px;text-align:center;font-size:10.5px;line-height:12px;color:#1a1a1a">Log_#:189.0</div><div style="position:absolute;left:157px;top:672px;width:145px;height:19px;border-top:1px solid #8c8c8c;border-left:1px solid #8c8c8c;box-shadow:inset 1px 1px 0 #fff"></div><div style="position:absolute;left:193px;top:674px;white-space:pre;width:71px;text-align:center;font-size:10.5px;line-height:12px;color:#1a1a1a">Time:5.81</div><div style="position:absolute;left:304px;top:672px;width:145px;height:19px;border-top:1px solid #8c8c8c;border-left:1px solid #8c8c8c;box-shadow:inset 1px 1px 0 #fff"></div><div style="position:absolute;left:340px;top:674px;white-space:pre;width:71px;text-align:center;font-size:10.5px;line-height:12px;color:#1a1a1a">Scaled_Load:0xD</div><div style="position:absolute;left:451px;top:672px;width:145px;height:19px;border-top:1px solid #8c8c8c;border-left:1px solid #8c8c8c;box-shadow:inset 1px 1px 0 #fff"></div><div style="position:absolute;left:487px;top:674px;white-space:pre;width:71px;text-align:center;font-size:10.5px;line-height:12px;color:#1a1a1a">Scaled_RPM:0x90</div><div style="position:absolute;left:598px;top:672px;width:145px;height:19px;border-top:1px solid #8c8c8c;border-left:1px solid #8c8c8c;box-shadow:inset 1px 1px 0 #fff"></div><div style="position:absolute;left:634px;top:674px;white-space:pre;width:71px;text-align:center;font-size:10.5px;line-height:12px;color:#1a1a1a">TPS:5.5</div><div style="position:absolute;left:745px;top:672px;width:145px;height:19px;border-top:1px solid #8c8c8c;border-left:1px solid #8c8c8c;box-shadow:inset 1px 1px 0 #fff"></div><div style="position:absolute;left:781px;top:674px;white-space:pre;width:71px;text-align:center;font-size:10.5px;line-height:12px;color:#1a1a1a">Coolant:179.0</div><div style="position:absolute;left:892px;top:672px;width:145px;height:19px;border-top:1px solid #8c8c8c;border-left:1px solid #8c8c8c;box-shadow:inset 1px 1px 0 #fff"></div><div style="position:absolute;left:928px;top:674px;white-space:pre;width:71px;text-align:center;font-size:10.5px;line-height:12px;color:#1a1a1a">Vbat:12.4</div><div style="position:absolute;left:1039px;top:672px;width:145px;height:19px;border-top:1px solid #8c8c8c;border-left:1px solid #8c8c8c;box-shadow:inset 1px 1px 0 #fff"></div><div style="position:absolute;left:1075px;top:674px;white-space:pre;width:71px;text-align:center;font-size:10.5px;line-height:12px;color:#1a1a1a">MAP:-9.8</div><div style="position:absolute;left:10px;top:691px;width:145px;height:19px;border-top:1px solid #8c8c8c;border-left:1px solid #8c8c8c;box-shadow:inset 1px 1px 0 #fff"></div><div style="position:absolute;left:46px;top:693px;white-space:pre;width:71px;text-align:center;font-size:10.5px;line-height:12px;color:#1a1a1a">CLT_Corr:0.0</div><div style="position:absolute;left:157px;top:691px;width:145px;height:19px;border-top:1px solid #8c8c8c;border-left:1px solid #8c8c8c;box-shadow:inset 1px 1px 0 #fff"></div><div style="position:absolute;left:193px;top:693px;white-space:pre;width:71px;text-align:center;font-size:10.5px;line-height:12px;color:#1a1a1a">O2_Corr:0.0</div><div style="position:absolute;left:304px;top:691px;width:145px;height:19px;border-top:1px solid #8c8c8c;border-left:1px solid #8c8c8c;box-shadow:inset 1px 1px 0 #fff"></div><div style="position:absolute;left:340px;top:693px;white-space:pre;width:71px;text-align:center;font-size:10.5px;line-height:12px;color:#1a1a1a">AFT_Corr:0.0</div><div style="position:absolute;left:451px;top:691px;width:145px;height:19px;border-top:1px solid #8c8c8c;border-left:1px solid #8c8c8c;box-shadow:inset 1px 1px 0 #fff"></div><div style="position:absolute;left:487px;top:693px;white-space:pre;width:71px;text-align:center;font-size:10.5px;line-height:12px;color:#1a1a1a">AIR_Corr:0.0</div><div style="position:absolute;left:598px;top:691px;width:145px;height:19px;border-top:1px solid #8c8c8c;border-left:1px solid #8c8c8c;box-shadow:inset 1px 1px 0 #fff"></div><div style="position:absolute;left:634px;top:693px;white-space:pre;width:71px;text-align:center;font-size:10.5px;line-height:12px;color:#1a1a1a">ATM_Corr:0.0</div><div style="position:absolute;left:745px;top:691px;width:145px;height:19px;border-top:1px solid #8c8c8c;border-left:1px solid #8c8c8c;box-shadow:inset 1px 1px 0 #fff"></div><div style="position:absolute;left:781px;top:693px;white-space:pre;width:71px;text-align:center;font-size:10.5px;line-height:12px;color:#1a1a1a">RPM:5450.0</div><div style="position:absolute;left:892px;top:691px;width:145px;height:19px;border-top:1px solid #8c8c8c;border-left:1px solid #8c8c8c;box-shadow:inset 1px 1px 0 #fff"></div><div style="position:absolute;left:928px;top:693px;white-space:pre;width:71px;text-align:center;font-size:10.5px;line-height:12px;color:#1a1a1a">Spk_Adv:28.0</div><div style="position:absolute;left:1039px;top:691px;width:145px;height:19px;border-top:1px solid #8c8c8c;border-left:1px solid #8c8c8c;box-shadow:inset 1px 1px 0 #fff"></div><div style="position:absolute;left:1075px;top:693px;white-space:pre;width:71px;text-align:center;font-size:10.5px;line-height:12px;color:#1a1a1a">Vol_Eff:32.0</div><div style="position:absolute;left:10px;top:710px;width:145px;height:19px;border-top:1px solid #8c8c8c;border-left:1px solid #8c8c8c;box-shadow:inset 1px 1px 0 #fff"></div><div style="position:absolute;left:46px;top:712px;white-space:pre;width:71px;text-align:center;font-size:10.5px;line-height:12px;color:#1a1a1a">Act_AFR:9.2</div><div style="position:absolute;left:157px;top:710px;width:145px;height:19px;border-top:1px solid #8c8c8c;border-left:1px solid #8c8c8c;box-shadow:inset 1px 1px 0 #fff"></div><div style="position:absolute;left:193px;top:712px;white-space:pre;width:71px;text-align:center;font-size:10.5px;line-height:12px;color:#1a1a1a">Base_Inj_PW:1.4</div><div style="position:absolute;left:304px;top:710px;width:145px;height:19px;border-top:1px solid #8c8c8c;border-left:1px solid #8c8c8c;box-shadow:inset 1px 1px 0 #fff"></div><div style="position:absolute;left:340px;top:712px;white-space:pre;width:71px;text-align:center;font-size:10.5px;line-height:12px;color:#1a1a1a">MPH:0.0</div><div style="position:absolute;left:451px;top:710px;width:145px;height:19px;border-top:1px solid #8c8c8c;border-left:1px solid #8c8c8c;box-shadow:inset 1px 1px 0 #fff"></div><div style="position:absolute;left:487px;top:712px;white-space:pre;width:71px;text-align:center;font-size:10.5px;line-height:12px;color:#1a1a1a">dMAP_Correction:0.0</div><div style="position:absolute;left:598px;top:710px;width:145px;height:19px;border-top:1px solid #8c8c8c;border-left:1px solid #8c8c8c;box-shadow:inset 1px 1px 0 #fff"></div><div style="position:absolute;left:634px;top:712px;white-space:pre;width:71px;text-align:center;font-size:10.5px;line-height:12px;color:#1a1a1a">Boost:-9.8</div><div style="position:absolute;left:745px;top:710px;width:145px;height:19px;border-top:1px solid #8c8c8c;border-left:1px solid #8c8c8c;box-shadow:inset 1px 1px 0 #fff"></div><div style="position:absolute;left:781px;top:712px;white-space:pre;width:71px;text-align:center;font-size:10.5px;line-height:12px;color:#1a1a1a">Gross_Inj_PW:1.4</div><svg width="1202" height="761" style="position:absolute;left:0;top:0"><path d="M26.50 688.50 L13.50 688.50 A13 13 0 0 1 15.72 681.23 Z" fill="#00ee00"/><path d="M26.50 688.50 L15.72 681.23 A13 13 0 0 1 18.86 677.98 Z" fill="#99ee22"/><path d="M26.50 688.50 L18.86 677.98 A13 13 0 0 1 33.77 677.72 Z" fill="#ffff00"/><path d="M26.50 688.50 L33.77 677.72 A13 13 0 0 1 37.02 680.86 Z" fill="#ffaa00"/><path d="M26.50 688.50 L37.02 680.86 A13 13 0 0 1 39.50 688.50 Z" fill="#ff0000"/><path d="M13.50 688.50 A13 13 0 0 1 39.50 688.50 Z" fill="none" stroke="#000" stroke-width="1.2"/><path d="M24.80 687.44 L15.48 681.61" stroke="#000" stroke-width="1.8"/><path d="M173.50 688.50 L160.50 688.50 A13 13 0 0 1 162.72 681.23 Z" fill="#00ee00"/><path d="M173.50 688.50 L162.72 681.23 A13 13 0 0 1 165.86 677.98 Z" fill="#99ee22"/><path d="M173.50 688.50 L165.86 677.98 A13 13 0 0 1 180.77 677.72 Z" fill="#ffff00"/><path d="M173.50 688.50 L180.77 677.72 A13 13 0 0 1 184.02 680.86 Z" fill="#ffaa00"/><path d="M173.50 688.50 L184.02 680.86 A13 13 0 0 1 186.50 688.50 Z" fill="#ff0000"/><path d="M160.50 688.50 A13 13 0 0 1 186.50 688.50 Z" fill="none" stroke="#000" stroke-width="1.2"/><path d="M171.69 687.65 L161.72 683.01" stroke="#000" stroke-width="1.8"/><path d="M320.50 688.50 L307.50 688.50 A13 13 0 0 1 309.72 681.23 Z" fill="#00ee00"/><path d="M320.50 688.50 L309.72 681.23 A13 13 0 0 1 312.86 677.98 Z" fill="#99ee22"/><path d="M320.50 688.50 L312.86 677.98 A13 13 0 0 1 327.77 677.72 Z" fill="#ffff00"/><path d="M320.50 688.50 L327.77 677.72 A13 13 0 0 1 331.02 680.86 Z" fill="#ffaa00"/><path d="M320.50 688.50 L331.02 680.86 A13 13 0 0 1 333.50 688.50 Z" fill="#ff0000"/><path d="M307.50 688.50 A13 13 0 0 1 333.50 688.50 Z" fill="none" stroke="#000" stroke-width="1.2"/><path d="M318.50 688.47 L307.50 688.27" stroke="#000" stroke-width="1.8"/><path d="M467.50 688.50 L454.50 688.50 A13 13 0 0 1 456.72 681.23 Z" fill="#00ee00"/><path d="M467.50 688.50 L456.72 681.23 A13 13 0 0 1 459.86 677.98 Z" fill="#99ee22"/><path d="M467.50 688.50 L459.86 677.98 A13 13 0 0 1 474.77 677.72 Z" fill="#ffff00"/><path d="M467.50 688.50 L474.77 677.72 A13 13 0 0 1 478.02 680.86 Z" fill="#ffaa00"/><path d="M467.50 688.50 L478.02 680.86 A13 13 0 0 1 480.50 688.50 Z" fill="#ff0000"/><path d="M454.50 688.50 A13 13 0 0 1 480.50 688.50 Z" fill="none" stroke="#000" stroke-width="1.2"/><path d="M468.86 687.04 L476.37 678.99" stroke="#000" stroke-width="1.8"/><path d="M614.50 688.50 L601.50 688.50 A13 13 0 0 1 603.72 681.23 Z" fill="#00ee00"/><path d="M614.50 688.50 L603.72 681.23 A13 13 0 0 1 606.86 677.98 Z" fill="#99ee22"/><path d="M614.50 688.50 L606.86 677.98 A13 13 0 0 1 621.77 677.72 Z" fill="#ffff00"/><path d="M614.50 688.50 L621.77 677.72 A13 13 0 0 1 625.02 680.86 Z" fill="#ffaa00"/><path d="M614.50 688.50 L625.02 680.86 A13 13 0 0 1 627.50 688.50 Z" fill="#ff0000"/><path d="M601.50 688.50 A13 13 0 0 1 627.50 688.50 Z" fill="none" stroke="#000" stroke-width="1.2"/><path d="M761.50 688.50 L748.50 688.50 A13 13 0 0 1 750.72 681.23 Z" fill="#00ee00"/><path d="M761.50 688.50 L750.72 681.23 A13 13 0 0 1 753.86 677.98 Z" fill="#99ee22"/><path d="M761.50 688.50 L753.86 677.98 A13 13 0 0 1 768.77 677.72 Z" fill="#ffff00"/><path d="M761.50 688.50 L768.77 677.72 A13 13 0 0 1 772.02 680.86 Z" fill="#ffaa00"/><path d="M761.50 688.50 L772.02 680.86 A13 13 0 0 1 774.50 688.50 Z" fill="#ff0000"/><path d="M748.50 688.50 A13 13 0 0 1 774.50 688.50 Z" fill="none" stroke="#000" stroke-width="1.2"/><path d="M763.31 687.65 L773.28 683.01" stroke="#000" stroke-width="1.8"/><path d="M908.50 688.50 L895.50 688.50 A13 13 0 0 1 897.72 681.23 Z" fill="#00ee00"/><path d="M908.50 688.50 L897.72 681.23 A13 13 0 0 1 900.86 677.98 Z" fill="#99ee22"/><path d="M908.50 688.50 L900.86 677.98 A13 13 0 0 1 915.77 677.72 Z" fill="#ffff00"/><path d="M908.50 688.50 L915.77 677.72 A13 13 0 0 1 919.02 680.86 Z" fill="#ffaa00"/><path d="M908.50 688.50 L919.02 680.86 A13 13 0 0 1 921.50 688.50 Z" fill="#ff0000"/><path d="M895.50 688.50 A13 13 0 0 1 921.50 688.50 Z" fill="none" stroke="#000" stroke-width="1.2"/><path d="M1055.50 688.50 L1042.50 688.50 A13 13 0 0 1 1044.72 681.23 Z" fill="#00ee00"/><path d="M1055.50 688.50 L1044.72 681.23 A13 13 0 0 1 1047.86 677.98 Z" fill="#99ee22"/><path d="M1055.50 688.50 L1047.86 677.98 A13 13 0 0 1 1062.77 677.72 Z" fill="#ffff00"/><path d="M1055.50 688.50 L1062.77 677.72 A13 13 0 0 1 1066.02 680.86 Z" fill="#ffaa00"/><path d="M1055.50 688.50 L1066.02 680.86 A13 13 0 0 1 1068.50 688.50 Z" fill="#ff0000"/><path d="M1042.50 688.50 A13 13 0 0 1 1068.50 688.50 Z" fill="none" stroke="#000" stroke-width="1.2"/><path d="M26.50 707.50 L13.50 707.50 A13 13 0 0 1 15.72 700.23 Z" fill="#00ee00"/><path d="M26.50 707.50 L15.72 700.23 A13 13 0 0 1 18.86 696.98 Z" fill="#99ee22"/><path d="M26.50 707.50 L18.86 696.98 A13 13 0 0 1 33.77 696.72 Z" fill="#ffff00"/><path d="M26.50 707.50 L33.77 696.72 A13 13 0 0 1 37.02 699.86 Z" fill="#ffaa00"/><path d="M26.50 707.50 L37.02 699.86 A13 13 0 0 1 39.50 707.50 Z" fill="#ff0000"/><path d="M13.50 707.50 A13 13 0 0 1 39.50 707.50 Z" fill="none" stroke="#000" stroke-width="1.2"/><path d="M173.50 707.50 L160.50 707.50 A13 13 0 0 1 162.72 700.23 Z" fill="#00ee00"/><path d="M173.50 707.50 L162.72 700.23 A13 13 0 0 1 165.86 696.98 Z" fill="#99ee22"/><path d="M173.50 707.50 L165.86 696.98 A13 13 0 0 1 180.77 696.72 Z" fill="#ffff00"/><path d="M173.50 707.50 L180.77 696.72 A13 13 0 0 1 184.02 699.86 Z" fill="#ffaa00"/><path d="M173.50 707.50 L184.02 699.86 A13 13 0 0 1 186.50 707.50 Z" fill="#ff0000"/><path d="M160.50 707.50 A13 13 0 0 1 186.50 707.50 Z" fill="none" stroke="#000" stroke-width="1.2"/><path d="M320.50 707.50 L307.50 707.50 A13 13 0 0 1 309.72 700.23 Z" fill="#00ee00"/><path d="M320.50 707.50 L309.72 700.23 A13 13 0 0 1 312.86 696.98 Z" fill="#99ee22"/><path d="M320.50 707.50 L312.86 696.98 A13 13 0 0 1 327.77 696.72 Z" fill="#ffff00"/><path d="M320.50 707.50 L327.77 696.72 A13 13 0 0 1 331.02 699.86 Z" fill="#ffaa00"/><path d="M320.50 707.50 L331.02 699.86 A13 13 0 0 1 333.50 707.50 Z" fill="#ff0000"/><path d="M307.50 707.50 A13 13 0 0 1 333.50 707.50 Z" fill="none" stroke="#000" stroke-width="1.2"/><path d="M467.50 707.50 L454.50 707.50 A13 13 0 0 1 456.72 700.23 Z" fill="#00ee00"/><path d="M467.50 707.50 L456.72 700.23 A13 13 0 0 1 459.86 696.98 Z" fill="#99ee22"/><path d="M467.50 707.50 L459.86 696.98 A13 13 0 0 1 474.77 696.72 Z" fill="#ffff00"/><path d="M467.50 707.50 L474.77 696.72 A13 13 0 0 1 478.02 699.86 Z" fill="#ffaa00"/><path d="M467.50 707.50 L478.02 699.86 A13 13 0 0 1 480.50 707.50 Z" fill="#ff0000"/><path d="M454.50 707.50 A13 13 0 0 1 480.50 707.50 Z" fill="none" stroke="#000" stroke-width="1.2"/><path d="M614.50 707.50 L601.50 707.50 A13 13 0 0 1 603.72 700.23 Z" fill="#00ee00"/><path d="M614.50 707.50 L603.72 700.23 A13 13 0 0 1 606.86 696.98 Z" fill="#99ee22"/><path d="M614.50 707.50 L606.86 696.98 A13 13 0 0 1 621.77 696.72 Z" fill="#ffff00"/><path d="M614.50 707.50 L621.77 696.72 A13 13 0 0 1 625.02 699.86 Z" fill="#ffaa00"/><path d="M614.50 707.50 L625.02 699.86 A13 13 0 0 1 627.50 707.50 Z" fill="#ff0000"/><path d="M601.50 707.50 A13 13 0 0 1 627.50 707.50 Z" fill="none" stroke="#000" stroke-width="1.2"/><path d="M761.50 707.50 L748.50 707.50 A13 13 0 0 1 750.72 700.23 Z" fill="#00ee00"/><path d="M761.50 707.50 L750.72 700.23 A13 13 0 0 1 753.86 696.98 Z" fill="#99ee22"/><path d="M761.50 707.50 L753.86 696.98 A13 13 0 0 1 768.77 696.72 Z" fill="#ffff00"/><path d="M761.50 707.50 L768.77 696.72 A13 13 0 0 1 772.02 699.86 Z" fill="#ffaa00"/><path d="M761.50 707.50 L772.02 699.86 A13 13 0 0 1 774.50 707.50 Z" fill="#ff0000"/><path d="M748.50 707.50 A13 13 0 0 1 774.50 707.50 Z" fill="none" stroke="#000" stroke-width="1.2"/><path d="M762.91 706.09 L770.69 698.31" stroke="#000" stroke-width="1.8"/><path d="M908.50 707.50 L895.50 707.50 A13 13 0 0 1 897.72 700.23 Z" fill="#00ee00"/><path d="M908.50 707.50 L897.72 700.23 A13 13 0 0 1 900.86 696.98 Z" fill="#99ee22"/><path d="M908.50 707.50 L900.86 696.98 A13 13 0 0 1 915.77 696.72 Z" fill="#ffff00"/><path d="M908.50 707.50 L915.77 696.72 A13 13 0 0 1 919.02 699.86 Z" fill="#ffaa00"/><path d="M908.50 707.50 L919.02 699.86 A13 13 0 0 1 921.50 707.50 Z" fill="#ff0000"/><path d="M895.50 707.50 A13 13 0 0 1 921.50 707.50 Z" fill="none" stroke="#000" stroke-width="1.2"/><path d="M906.57 706.98 L895.94 704.14" stroke="#000" stroke-width="1.8"/><path d="M1055.50 707.50 L1042.50 707.50 A13 13 0 0 1 1044.72 700.23 Z" fill="#00ee00"/><path d="M1055.50 707.50 L1044.72 700.23 A13 13 0 0 1 1047.86 696.98 Z" fill="#99ee22"/><path d="M1055.50 707.50 L1047.86 696.98 A13 13 0 0 1 1062.77 696.72 Z" fill="#ffff00"/><path d="M1055.50 707.50 L1062.77 696.72 A13 13 0 0 1 1066.02 699.86 Z" fill="#ffaa00"/><path d="M1055.50 707.50 L1066.02 699.86 A13 13 0 0 1 1068.50 707.50 Z" fill="#ff0000"/><path d="M1042.50 707.50 A13 13 0 0 1 1068.50 707.50 Z" fill="none" stroke="#000" stroke-width="1.2"/><path d="M1053.55 707.05 L1042.83 704.58" stroke="#000" stroke-width="1.8"/><path d="M26.50 726.50 L13.50 726.50 A13 13 0 0 1 15.72 719.23 Z" fill="#00ee00"/><path d="M26.50 726.50 L15.72 719.23 A13 13 0 0 1 18.86 715.98 Z" fill="#99ee22"/><path d="M26.50 726.50 L18.86 715.98 A13 13 0 0 1 33.77 715.72 Z" fill="#ffff00"/><path d="M26.50 726.50 L33.77 715.72 A13 13 0 0 1 37.02 718.86 Z" fill="#ffaa00"/><path d="M26.50 726.50 L37.02 718.86 A13 13 0 0 1 39.50 726.50 Z" fill="#ff0000"/><path d="M13.50 726.50 A13 13 0 0 1 39.50 726.50 Z" fill="none" stroke="#000" stroke-width="1.2"/><path d="M173.50 726.50 L160.50 726.50 A13 13 0 0 1 162.72 719.23 Z" fill="#00ee00"/><path d="M173.50 726.50 L162.72 719.23 A13 13 0 0 1 165.86 715.98 Z" fill="#99ee22"/><path d="M173.50 726.50 L165.86 715.98 A13 13 0 0 1 180.77 715.72 Z" fill="#ffff00"/><path d="M173.50 726.50 L180.77 715.72 A13 13 0 0 1 184.02 718.86 Z" fill="#ffaa00"/><path d="M173.50 726.50 L184.02 718.86 A13 13 0 0 1 186.50 726.50 Z" fill="#ff0000"/><path d="M160.50 726.50 A13 13 0 0 1 186.50 726.50 Z" fill="none" stroke="#000" stroke-width="1.2"/><path d="M320.50 726.50 L307.50 726.50 A13 13 0 0 1 309.72 719.23 Z" fill="#00ee00"/><path d="M320.50 726.50 L309.72 719.23 A13 13 0 0 1 312.86 715.98 Z" fill="#99ee22"/><path d="M320.50 726.50 L312.86 715.98 A13 13 0 0 1 327.77 715.72 Z" fill="#ffff00"/><path d="M320.50 726.50 L327.77 715.72 A13 13 0 0 1 331.02 718.86 Z" fill="#ffaa00"/><path d="M320.50 726.50 L331.02 718.86 A13 13 0 0 1 333.50 726.50 Z" fill="#ff0000"/><path d="M307.50 726.50 A13 13 0 0 1 333.50 726.50 Z" fill="none" stroke="#000" stroke-width="1.2"/><path d="M467.50 726.50 L454.50 726.50 A13 13 0 0 1 456.72 719.23 Z" fill="#00ee00"/><path d="M467.50 726.50 L456.72 719.23 A13 13 0 0 1 459.86 715.98 Z" fill="#99ee22"/><path d="M467.50 726.50 L459.86 715.98 A13 13 0 0 1 474.77 715.72 Z" fill="#ffff00"/><path d="M467.50 726.50 L474.77 715.72 A13 13 0 0 1 478.02 718.86 Z" fill="#ffaa00"/><path d="M467.50 726.50 L478.02 718.86 A13 13 0 0 1 480.50 726.50 Z" fill="#ff0000"/><path d="M454.50 726.50 A13 13 0 0 1 480.50 726.50 Z" fill="none" stroke="#000" stroke-width="1.2"/><path d="M467.08 724.54 L464.80 713.78" stroke="#000" stroke-width="1.8"/><path d="M614.50 726.50 L601.50 726.50 A13 13 0 0 1 603.72 719.23 Z" fill="#00ee00"/><path d="M614.50 726.50 L603.72 719.23 A13 13 0 0 1 606.86 715.98 Z" fill="#99ee22"/><path d="M614.50 726.50 L606.86 715.98 A13 13 0 0 1 621.77 715.72 Z" fill="#ffff00"/><path d="M614.50 726.50 L621.77 715.72 A13 13 0 0 1 625.02 718.86 Z" fill="#ffaa00"/><path d="M614.50 726.50 L625.02 718.86 A13 13 0 0 1 627.50 726.50 Z" fill="#ff0000"/><path d="M601.50 726.50 A13 13 0 0 1 627.50 726.50 Z" fill="none" stroke="#000" stroke-width="1.2"/><path d="M761.50 726.50 L748.50 726.50 A13 13 0 0 1 750.72 719.23 Z" fill="#00ee00"/><path d="M761.50 726.50 L750.72 719.23 A13 13 0 0 1 753.86 715.98 Z" fill="#99ee22"/><path d="M761.50 726.50 L753.86 715.98 A13 13 0 0 1 768.77 715.72 Z" fill="#ffff00"/><path d="M761.50 726.50 L768.77 715.72 A13 13 0 0 1 772.02 718.86 Z" fill="#ffaa00"/><path d="M761.50 726.50 L772.02 718.86 A13 13 0 0 1 774.50 726.50 Z" fill="#ff0000"/><path d="M748.50 726.50 A13 13 0 0 1 774.50 726.50 Z" fill="none" stroke="#000" stroke-width="1.2"/></svg><div style="position:absolute;left:10px;top:728px;width:929px;height:22px;background:#fff"></div><div style="position:absolute;left:11px;top:731px;width:927px;height:17px;border-top:1px solid #555;border-left:1px solid #555;border-right:1px solid #aaa;border-bottom:1px solid #aaa"></div><div style="position:absolute;left:14px;top:735px;width:81px;height:9px;background:#0000ff"></div><svg width="1202" height="761" style="position:absolute;left:0;top:0" fill="#000"><rect x="945" y="735" width="10" height="10"/><rect x="968" y="733" width="2" height="14"/><rect x="972" y="733" width="2" height="14"/><path d="M986 733 L999 740 L986 747 Z"/><circle cx="1035.5" cy="738.5" r="4.3" fill="none" stroke="#000" stroke-width="1.3"/><path d="M1033 738.5 H1038" stroke="#000" stroke-width="1.4"/><path d="M1027.5 746.5 L1032.5 741.5" stroke="#000" stroke-width="1.6"/><circle cx="1056.5" cy="738.5" r="4.3" fill="none" stroke="#000" stroke-width="1.3"/><path d="M1054 738.5 H1059 M1056.5 736 V741" stroke="#000" stroke-width="1.4"/><path d="M1048.5 746.5 L1053.5 741.5" stroke="#000" stroke-width="1.6"/><rect x="1070" y="733" width="2" height="14"/><path d="M1072 740 L1082 733 L1082 747 Z"/><path d="M1091 740 L1097 734 L1097 746 Z M1097 740 L1103 734 L1103 746 Z"/><rect x="1111" y="739" width="14" height="2"/><rect x="1132" y="739" width="14" height="2"/><rect x="1138" y="733.5" width="2.2" height="13"/><path d="M1154 734 L1160 740 L1154 746 Z M1160 734 L1166 740 L1160 746 Z"/><path d="M1175 733 L1185 740 L1175 747 Z"/><rect x="1185" y="733" width="2" height="14"/></svg></body></html>
